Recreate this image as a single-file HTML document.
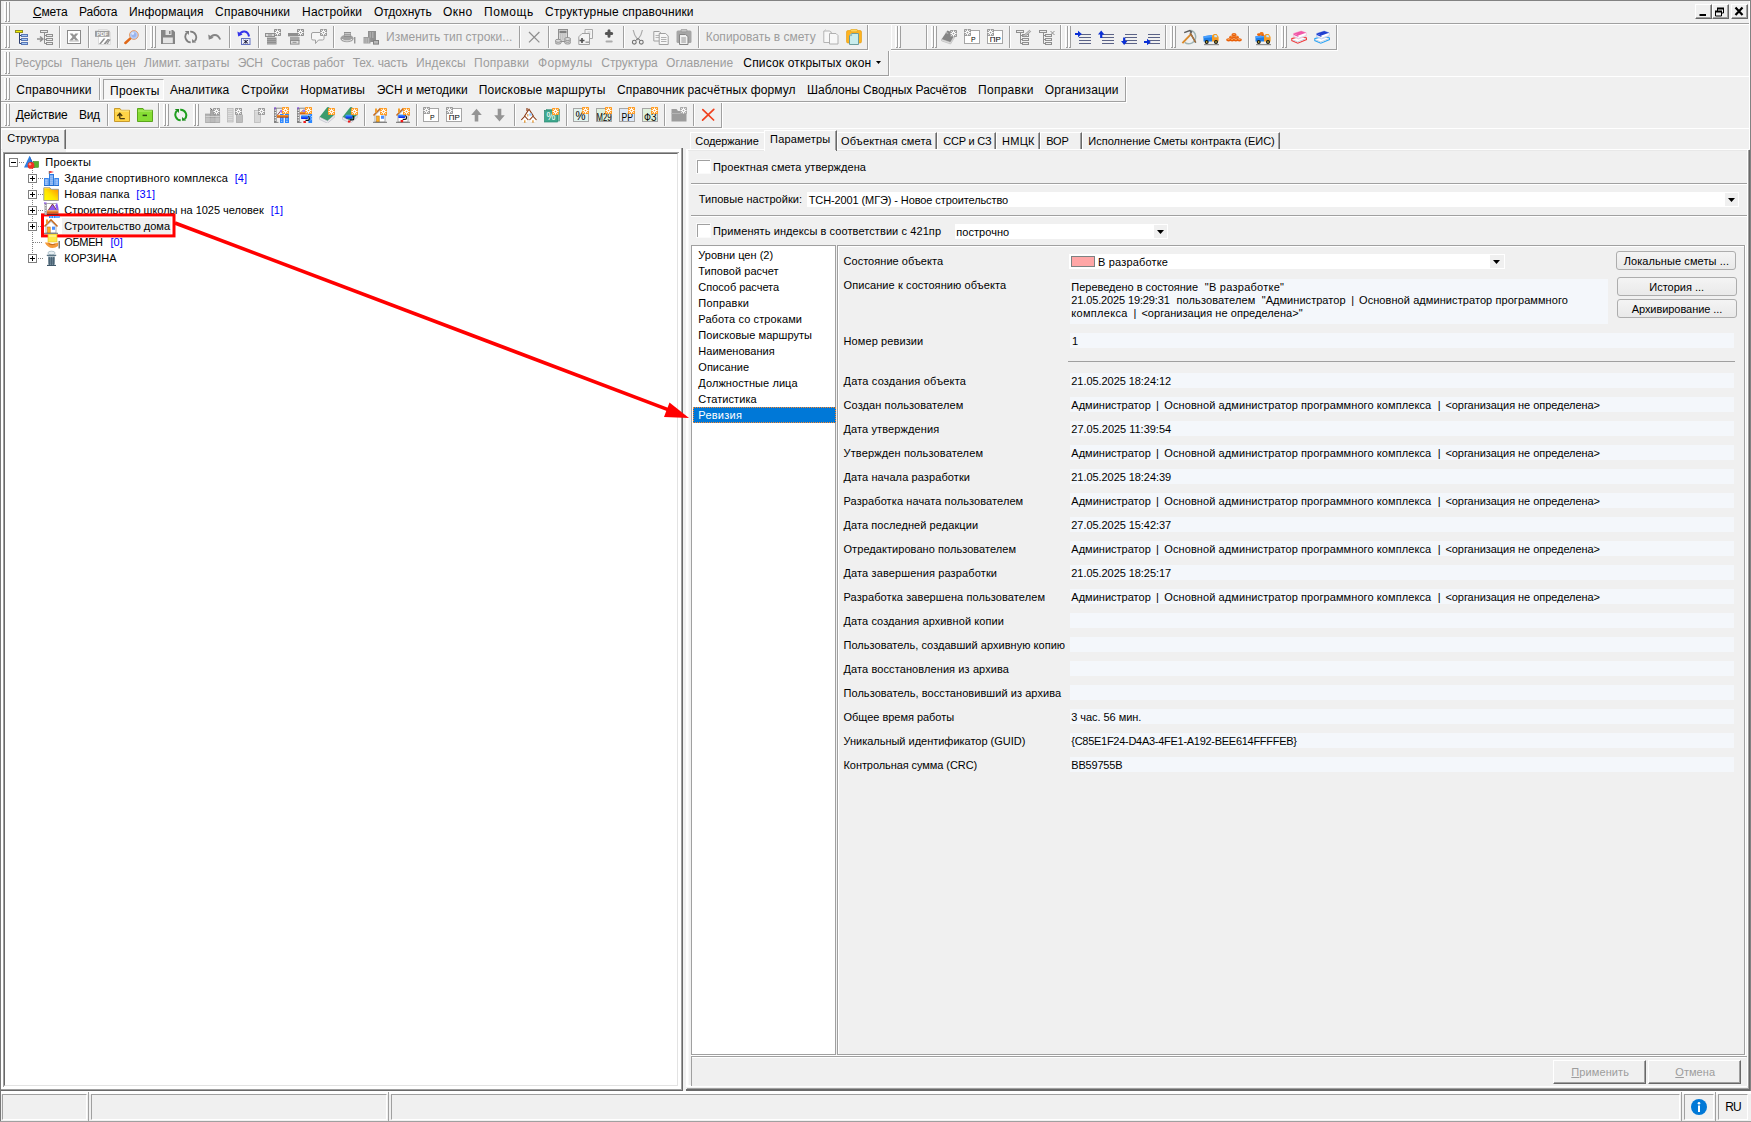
<!DOCTYPE html><html lang="ru"><head><meta charset="utf-8"><title>Смета</title><style>
html,body{margin:0;padding:0}
body{width:1751px;height:1122px;overflow:hidden;background:#f0f0f0;position:relative;font-family:"Liberation Sans",sans-serif;}
div,span,svg{position:absolute;box-sizing:border-box}
span{white-space:pre;color:#000}
.t{font-size:11px;line-height:13px;height:13px}
.m{font-size:12px;line-height:15px;height:15px}
.g{color:#9d9d9d}
.b{color:#0000ff}
.w{color:#fff}
u{text-decoration:underline;text-underline-offset:1px}
</style></head><body><div style="left:0px;top:0px;width:1751px;height:1px;background:#828282;"></div><div style="left:0px;top:0px;width:1px;height:1122px;background:#787878;"></div><div style="left:1px;top:25px;width:1px;height:103px;background:#f8f8f8;"></div><div style="left:1750px;top:0px;width:1px;height:1091px;background:#828282;"></div><div style="left:1749px;top:1px;width:1px;height:148px;background:#ffffff;"></div><div style="left:4px;top:2px;width:1px;height:20px;background:#ffffff;"></div><div style="left:5px;top:2px;width:1px;height:20px;background:#f8f8f8;"></div><div style="left:6px;top:2px;width:1px;height:20px;background:#a0a0a0;"></div><div style="left:5px;top:21px;width:2px;height:1px;background:#a0a0a0;"></div><div style="left:7px;top:2px;width:1px;height:20px;background:#ffffff;"></div><div style="left:8px;top:2px;width:1px;height:20px;background:#f8f8f8;"></div><div style="left:9px;top:2px;width:1px;height:20px;background:#a0a0a0;"></div><div style="left:8px;top:21px;width:2px;height:1px;background:#a0a0a0;"></div><div style="left:1px;top:23px;width:1748px;height:1px;background:#a0a0a0;"></div><div style="left:1px;top:24px;width:1748px;height:1px;background:#ffffff;"></div><span id="t0" class="m" style="left:32.9px;top:5px;letter-spacing:-0.127px;"><u>С</u>мета</span><span id="t1" class="m" style="left:79.1px;top:5px;letter-spacing:-0.235px;">Работа</span><span id="t2" class="m" style="left:129.1px;top:5px;letter-spacing:0.112px;">Информация</span><span id="t3" class="m" style="left:215.1px;top:5px;letter-spacing:0.227px;">Справочники</span><span id="t4" class="m" style="left:302.1px;top:5px;letter-spacing:0.128px;">Настройки</span><span id="t5" class="m" style="left:374.1px;top:5px;letter-spacing:-0.084px;">Отдохнуть</span><span id="t6" class="m" style="left:443.1px;top:5px;letter-spacing:0.427px;">Окно</span><span id="t7" class="m" style="left:484.1px;top:5px;letter-spacing:0.540px;">Помощь</span><span id="t8" class="m" style="left:545.1px;top:5px;letter-spacing:0.133px;">Структурные справочники</span><div style="left:1695px;top:4px;width:17px;height:15px;background:#f0f0f0;border-top:1px solid #ffffff;border-left:1px solid #ffffff;border-right:1px solid #696969;border-bottom:1px solid #696969;"></div><div style="left:1696px;top:5px;width:15px;height:13px;background:#f0f0f0;border-right:1px solid #a0a0a0;border-bottom:1px solid #a0a0a0;"></div><div style="left:1712px;top:4px;width:17px;height:15px;background:#f0f0f0;border-top:1px solid #ffffff;border-left:1px solid #ffffff;border-right:1px solid #696969;border-bottom:1px solid #696969;"></div><div style="left:1713px;top:5px;width:15px;height:13px;background:#f0f0f0;border-right:1px solid #a0a0a0;border-bottom:1px solid #a0a0a0;"></div><div style="left:1731px;top:4px;width:17px;height:15px;background:#f0f0f0;border-top:1px solid #ffffff;border-left:1px solid #ffffff;border-right:1px solid #696969;border-bottom:1px solid #696969;"></div><div style="left:1732px;top:5px;width:15px;height:13px;background:#f0f0f0;border-right:1px solid #a0a0a0;border-bottom:1px solid #a0a0a0;"></div><svg style="left:1695px;top:4px" width="54" height="15" viewBox="0 0 54 15"><rect x="4.5" y="10" width="6.500" height="2" fill="#000"/><path d="M22.500 4.500h6v4.500h-6z" fill="#f0f0f0" stroke="#000"/><rect x="22" y="3.500" width="7" height="2" fill="#000"/><path d="M20.500 7.500h6v4.500h-6z" fill="#f0f0f0" stroke="#000"/><rect x="20" y="6.500" width="7" height="2" fill="#000"/><path d="M40.500 3.500l7 7.500M47.500 3.500l-7 7.500" stroke="#000" stroke-width="2.200" fill="none"/></svg><div style="left:1px;top:49px;width:145px;height:1px;background:#a0a0a0;"></div><div style="left:1px;top:50px;width:145px;height:1px;background:#ffffff;"></div><div style="left:145px;top:25px;width:1px;height:25px;background:#a0a0a0;"></div><div style="left:146px;top:25px;width:1px;height:26px;background:#ffffff;"></div><div style="left:4px;top:26px;width:1px;height:22px;background:#ffffff;"></div><div style="left:5px;top:26px;width:1px;height:22px;background:#f8f8f8;"></div><div style="left:6px;top:26px;width:1px;height:22px;background:#a0a0a0;"></div><div style="left:5px;top:47px;width:2px;height:1px;background:#a0a0a0;"></div><div style="left:7px;top:26px;width:1px;height:22px;background:#ffffff;"></div><div style="left:8px;top:26px;width:1px;height:22px;background:#f8f8f8;"></div><div style="left:9px;top:26px;width:1px;height:22px;background:#a0a0a0;"></div><div style="left:8px;top:47px;width:2px;height:1px;background:#a0a0a0;"></div><div style="left:59px;top:26px;width:1px;height:22px;background:#a0a0a0;"></div><div style="left:60px;top:26px;width:1px;height:22px;background:#ffffff;"></div><div style="left:88px;top:26px;width:1px;height:22px;background:#a0a0a0;"></div><div style="left:89px;top:26px;width:1px;height:22px;background:#ffffff;"></div><div style="left:117px;top:26px;width:1px;height:22px;background:#a0a0a0;"></div><div style="left:118px;top:26px;width:1px;height:22px;background:#ffffff;"></div><div style="left:147px;top:49px;width:721px;height:1px;background:#a0a0a0;"></div><div style="left:147px;top:50px;width:721px;height:1px;background:#ffffff;"></div><div style="left:867px;top:25px;width:1px;height:25px;background:#a0a0a0;"></div><div style="left:868px;top:25px;width:1px;height:26px;background:#ffffff;"></div><div style="left:150px;top:26px;width:1px;height:22px;background:#ffffff;"></div><div style="left:151px;top:26px;width:1px;height:22px;background:#f8f8f8;"></div><div style="left:152px;top:26px;width:1px;height:22px;background:#a0a0a0;"></div><div style="left:151px;top:47px;width:2px;height:1px;background:#a0a0a0;"></div><div style="left:153px;top:26px;width:1px;height:22px;background:#ffffff;"></div><div style="left:154px;top:26px;width:1px;height:22px;background:#f8f8f8;"></div><div style="left:155px;top:26px;width:1px;height:22px;background:#a0a0a0;"></div><div style="left:154px;top:47px;width:2px;height:1px;background:#a0a0a0;"></div><div style="left:229px;top:26px;width:1px;height:22px;background:#a0a0a0;"></div><div style="left:230px;top:26px;width:1px;height:22px;background:#ffffff;"></div><div style="left:258px;top:26px;width:1px;height:22px;background:#a0a0a0;"></div><div style="left:259px;top:26px;width:1px;height:22px;background:#ffffff;"></div><div style="left:333px;top:26px;width:1px;height:22px;background:#a0a0a0;"></div><div style="left:334px;top:26px;width:1px;height:22px;background:#ffffff;"></div><div style="left:519px;top:26px;width:1px;height:22px;background:#a0a0a0;"></div><div style="left:520px;top:26px;width:1px;height:22px;background:#ffffff;"></div><div style="left:548px;top:26px;width:1px;height:22px;background:#a0a0a0;"></div><div style="left:549px;top:26px;width:1px;height:22px;background:#ffffff;"></div><div style="left:623px;top:26px;width:1px;height:22px;background:#a0a0a0;"></div><div style="left:624px;top:26px;width:1px;height:22px;background:#ffffff;"></div><div style="left:698px;top:26px;width:1px;height:22px;background:#a0a0a0;"></div><div style="left:699px;top:26px;width:1px;height:22px;background:#ffffff;"></div><span id="t9" class="m g" style="left:386.1px;top:30px;letter-spacing:-0.004px;">Изменить тип строки...</span><span id="t10" class="m g" style="left:705.7px;top:30px;letter-spacing:0.010px;">Копировать в смету</span><div style="left:891px;top:49px;width:36px;height:1px;background:#a0a0a0;"></div><div style="left:891px;top:50px;width:36px;height:1px;background:#ffffff;"></div><div style="left:926px;top:25px;width:1px;height:25px;background:#a0a0a0;"></div><div style="left:927px;top:25px;width:1px;height:26px;background:#ffffff;"></div><div style="left:895px;top:26px;width:1px;height:22px;background:#ffffff;"></div><div style="left:896px;top:26px;width:1px;height:22px;background:#f8f8f8;"></div><div style="left:897px;top:26px;width:1px;height:22px;background:#a0a0a0;"></div><div style="left:896px;top:47px;width:2px;height:1px;background:#a0a0a0;"></div><div style="left:898px;top:26px;width:1px;height:22px;background:#ffffff;"></div><div style="left:899px;top:26px;width:1px;height:22px;background:#f8f8f8;"></div><div style="left:900px;top:26px;width:1px;height:22px;background:#a0a0a0;"></div><div style="left:899px;top:47px;width:2px;height:1px;background:#a0a0a0;"></div><div style="left:891px;top:25px;width:1px;height:24px;background:#ffffff;"></div><div style="left:927px;top:49px;width:134px;height:1px;background:#a0a0a0;"></div><div style="left:927px;top:50px;width:134px;height:1px;background:#ffffff;"></div><div style="left:1060px;top:25px;width:1px;height:25px;background:#a0a0a0;"></div><div style="left:1061px;top:25px;width:1px;height:26px;background:#ffffff;"></div><div style="left:931px;top:26px;width:1px;height:22px;background:#ffffff;"></div><div style="left:932px;top:26px;width:1px;height:22px;background:#f8f8f8;"></div><div style="left:933px;top:26px;width:1px;height:22px;background:#a0a0a0;"></div><div style="left:932px;top:47px;width:2px;height:1px;background:#a0a0a0;"></div><div style="left:934px;top:26px;width:1px;height:22px;background:#ffffff;"></div><div style="left:935px;top:26px;width:1px;height:22px;background:#f8f8f8;"></div><div style="left:936px;top:26px;width:1px;height:22px;background:#a0a0a0;"></div><div style="left:935px;top:47px;width:2px;height:1px;background:#a0a0a0;"></div><div style="left:1009px;top:26px;width:1px;height:22px;background:#a0a0a0;"></div><div style="left:1010px;top:26px;width:1px;height:22px;background:#ffffff;"></div><div style="left:1061px;top:49px;width:105px;height:1px;background:#a0a0a0;"></div><div style="left:1061px;top:50px;width:105px;height:1px;background:#ffffff;"></div><div style="left:1165px;top:25px;width:1px;height:25px;background:#a0a0a0;"></div><div style="left:1166px;top:25px;width:1px;height:26px;background:#ffffff;"></div><div style="left:1065px;top:26px;width:1px;height:22px;background:#ffffff;"></div><div style="left:1066px;top:26px;width:1px;height:22px;background:#f8f8f8;"></div><div style="left:1067px;top:26px;width:1px;height:22px;background:#a0a0a0;"></div><div style="left:1066px;top:47px;width:2px;height:1px;background:#a0a0a0;"></div><div style="left:1068px;top:26px;width:1px;height:22px;background:#ffffff;"></div><div style="left:1069px;top:26px;width:1px;height:22px;background:#f8f8f8;"></div><div style="left:1070px;top:26px;width:1px;height:22px;background:#a0a0a0;"></div><div style="left:1069px;top:47px;width:2px;height:1px;background:#a0a0a0;"></div><div style="left:1166px;top:49px;width:111px;height:1px;background:#a0a0a0;"></div><div style="left:1166px;top:50px;width:111px;height:1px;background:#ffffff;"></div><div style="left:1276px;top:25px;width:1px;height:25px;background:#a0a0a0;"></div><div style="left:1277px;top:25px;width:1px;height:26px;background:#ffffff;"></div><div style="left:1170px;top:26px;width:1px;height:22px;background:#ffffff;"></div><div style="left:1171px;top:26px;width:1px;height:22px;background:#f8f8f8;"></div><div style="left:1172px;top:26px;width:1px;height:22px;background:#a0a0a0;"></div><div style="left:1171px;top:47px;width:2px;height:1px;background:#a0a0a0;"></div><div style="left:1173px;top:26px;width:1px;height:22px;background:#ffffff;"></div><div style="left:1174px;top:26px;width:1px;height:22px;background:#f8f8f8;"></div><div style="left:1175px;top:26px;width:1px;height:22px;background:#a0a0a0;"></div><div style="left:1174px;top:47px;width:2px;height:1px;background:#a0a0a0;"></div><div style="left:1248px;top:26px;width:1px;height:22px;background:#a0a0a0;"></div><div style="left:1249px;top:26px;width:1px;height:22px;background:#ffffff;"></div><div style="left:1277px;top:49px;width:60px;height:1px;background:#a0a0a0;"></div><div style="left:1277px;top:50px;width:60px;height:1px;background:#ffffff;"></div><div style="left:1336px;top:25px;width:1px;height:25px;background:#a0a0a0;"></div><div style="left:1337px;top:25px;width:1px;height:26px;background:#ffffff;"></div><div style="left:1281px;top:26px;width:1px;height:22px;background:#ffffff;"></div><div style="left:1282px;top:26px;width:1px;height:22px;background:#f8f8f8;"></div><div style="left:1283px;top:26px;width:1px;height:22px;background:#a0a0a0;"></div><div style="left:1282px;top:47px;width:2px;height:1px;background:#a0a0a0;"></div><div style="left:1284px;top:26px;width:1px;height:22px;background:#ffffff;"></div><div style="left:1285px;top:26px;width:1px;height:22px;background:#f8f8f8;"></div><div style="left:1286px;top:26px;width:1px;height:22px;background:#a0a0a0;"></div><div style="left:1285px;top:47px;width:2px;height:1px;background:#a0a0a0;"></div><div style="left:1px;top:75px;width:888px;height:1px;background:#a0a0a0;"></div><div style="left:1px;top:76px;width:888px;height:1px;background:#ffffff;"></div><div style="left:888px;top:51px;width:1px;height:25px;background:#a0a0a0;"></div><div style="left:889px;top:51px;width:1px;height:26px;background:#ffffff;"></div><div style="left:4px;top:52px;width:1px;height:22px;background:#ffffff;"></div><div style="left:5px;top:52px;width:1px;height:22px;background:#f8f8f8;"></div><div style="left:6px;top:52px;width:1px;height:22px;background:#a0a0a0;"></div><div style="left:5px;top:73px;width:2px;height:1px;background:#a0a0a0;"></div><div style="left:7px;top:52px;width:1px;height:22px;background:#ffffff;"></div><div style="left:8px;top:52px;width:1px;height:22px;background:#f8f8f8;"></div><div style="left:9px;top:52px;width:1px;height:22px;background:#a0a0a0;"></div><div style="left:8px;top:73px;width:2px;height:1px;background:#a0a0a0;"></div><span id="t11" class="m g" style="left:15.1px;top:56px;letter-spacing:-0.047px;">Ресурсы</span><span id="t12" class="m g" style="left:71.1px;top:56px;letter-spacing:-0.023px;">Панель цен</span><span id="t13" class="m g" style="left:144.1px;top:56px;letter-spacing:0.015px;">Лимит. затраты</span><span id="t14" class="m g" style="left:237.7px;top:56px;letter-spacing:-0.323px;">ЭСН</span><span id="t15" class="m g" style="left:271.1px;top:56px;letter-spacing:-0.135px;">Состав работ</span><span id="t16" class="m g" style="left:352.7px;top:56px;letter-spacing:-0.142px;">Тех. часть</span><span id="t17" class="m g" style="left:416.1px;top:56px;letter-spacing:0.095px;">Индексы</span><span id="t18" class="m g" style="left:474.1px;top:56px;letter-spacing:0.214px;">Поправки</span><span id="t19" class="m g" style="left:538.1px;top:56px;letter-spacing:0.283px;">Формулы</span><span id="t20" class="m g" style="left:601.3px;top:56px;letter-spacing:-0.060px;">Структура</span><span id="t21" class="m g" style="left:666.1px;top:56px;letter-spacing:0.009px;">Оглавление</span><span id="t22" class="m" style="left:743.3px;top:56px;letter-spacing:0.173px;">Список открытых окон</span><svg style="left:876px;top:61px" width="5" height="3"><path d="M0 0h5l-2.5 3z" fill="#000"/></svg><div style="left:1px;top:76px;width:1748px;height:1px;background:#ffffff;"></div><div style="left:1px;top:101px;width:1125px;height:1px;background:#a0a0a0;"></div><div style="left:1px;top:102px;width:1125px;height:1px;background:#ffffff;"></div><div style="left:1125px;top:77px;width:1px;height:25px;background:#a0a0a0;"></div><div style="left:1126px;top:77px;width:1px;height:26px;background:#ffffff;"></div><div style="left:4px;top:78px;width:1px;height:22px;background:#ffffff;"></div><div style="left:5px;top:78px;width:1px;height:22px;background:#f8f8f8;"></div><div style="left:6px;top:78px;width:1px;height:22px;background:#a0a0a0;"></div><div style="left:5px;top:99px;width:2px;height:1px;background:#a0a0a0;"></div><div style="left:7px;top:78px;width:1px;height:22px;background:#ffffff;"></div><div style="left:8px;top:78px;width:1px;height:22px;background:#f8f8f8;"></div><div style="left:9px;top:78px;width:1px;height:22px;background:#a0a0a0;"></div><div style="left:8px;top:99px;width:2px;height:1px;background:#a0a0a0;"></div><div style="left:99px;top:78px;width:1px;height:22px;background:#a0a0a0;"></div><div style="left:100px;top:78px;width:1px;height:22px;background:#ffffff;"></div><div style="left:103px;top:79px;width:61px;height:21px;background:#f6f6f6;border-top:1px solid #a0a0a0;border-left:1px solid #a0a0a0;border-right:1px solid #ffffff;border-bottom:1px solid #ffffff;"></div><span id="t23" class="m" style="left:16.3px;top:83px;letter-spacing:0.245px;">Справочники</span><span id="t24" class="m" style="left:110.1px;top:84px;letter-spacing:0.206px;">Проекты</span><span id="t25" class="m" style="left:169.9px;top:83px;">Аналитика</span><span id="t26" class="m" style="left:241.3px;top:83px;letter-spacing:0.175px;">Стройки</span><span id="t27" class="m" style="left:300.3px;top:83px;letter-spacing:0.103px;">Нормативы</span><span id="t28" class="m" style="left:376.7px;top:83px;letter-spacing:-0.021px;">ЭСН и методики</span><span id="t29" class="m" style="left:478.7px;top:83px;letter-spacing:0.225px;">Поисковые маршруты</span><span id="t30" class="m" style="left:617.1px;top:83px;letter-spacing:0.100px;">Справочник расчётных формул</span><span id="t31" class="m" style="left:807.1px;top:83px;letter-spacing:-0.050px;">Шаблоны Сводных Расчётов</span><span id="t32" class="m" style="left:978.1px;top:83px;letter-spacing:0.264px;">Поправки</span><span id="t33" class="m" style="left:1044.7px;top:83px;letter-spacing:0.128px;">Организации</span><div style="left:1px;top:127px;width:158px;height:1px;background:#a0a0a0;"></div><div style="left:1px;top:128px;width:158px;height:1px;background:#ffffff;"></div><div style="left:158px;top:103px;width:1px;height:25px;background:#a0a0a0;"></div><div style="left:159px;top:103px;width:1px;height:26px;background:#ffffff;"></div><div style="left:4px;top:104px;width:1px;height:22px;background:#ffffff;"></div><div style="left:5px;top:104px;width:1px;height:22px;background:#f8f8f8;"></div><div style="left:6px;top:104px;width:1px;height:22px;background:#a0a0a0;"></div><div style="left:5px;top:125px;width:2px;height:1px;background:#a0a0a0;"></div><div style="left:7px;top:104px;width:1px;height:22px;background:#ffffff;"></div><div style="left:8px;top:104px;width:1px;height:22px;background:#f8f8f8;"></div><div style="left:9px;top:104px;width:1px;height:22px;background:#a0a0a0;"></div><div style="left:8px;top:125px;width:2px;height:1px;background:#a0a0a0;"></div><span id="t34" class="m" style="left:15.7px;top:108px;letter-spacing:-0.096px;">Действие</span><span id="t35" class="m" style="left:79.1px;top:108px;letter-spacing:-0.373px;">Вид</span><div style="left:107px;top:104px;width:1px;height:22px;background:#a0a0a0;"></div><div style="left:108px;top:104px;width:1px;height:22px;background:#ffffff;"></div><div style="left:160px;top:127px;width:562px;height:1px;background:#a0a0a0;"></div><div style="left:160px;top:128px;width:562px;height:1px;background:#ffffff;"></div><div style="left:721px;top:103px;width:1px;height:25px;background:#a0a0a0;"></div><div style="left:722px;top:103px;width:1px;height:26px;background:#ffffff;"></div><div style="left:163px;top:104px;width:1px;height:22px;background:#ffffff;"></div><div style="left:164px;top:104px;width:1px;height:22px;background:#f8f8f8;"></div><div style="left:165px;top:104px;width:1px;height:22px;background:#a0a0a0;"></div><div style="left:164px;top:125px;width:2px;height:1px;background:#a0a0a0;"></div><div style="left:166px;top:104px;width:1px;height:22px;background:#ffffff;"></div><div style="left:167px;top:104px;width:1px;height:22px;background:#f8f8f8;"></div><div style="left:168px;top:104px;width:1px;height:22px;background:#a0a0a0;"></div><div style="left:167px;top:125px;width:2px;height:1px;background:#a0a0a0;"></div><div style="left:193px;top:104px;width:1px;height:22px;background:#ffffff;"></div><div style="left:194px;top:104px;width:1px;height:22px;background:#f8f8f8;"></div><div style="left:195px;top:104px;width:1px;height:22px;background:#a0a0a0;"></div><div style="left:194px;top:125px;width:2px;height:1px;background:#a0a0a0;"></div><div style="left:196px;top:104px;width:1px;height:22px;background:#ffffff;"></div><div style="left:197px;top:104px;width:1px;height:22px;background:#f8f8f8;"></div><div style="left:198px;top:104px;width:1px;height:22px;background:#a0a0a0;"></div><div style="left:197px;top:125px;width:2px;height:1px;background:#a0a0a0;"></div><div style="left:364px;top:104px;width:1px;height:22px;background:#a0a0a0;"></div><div style="left:365px;top:104px;width:1px;height:22px;background:#ffffff;"></div><div style="left:416px;top:104px;width:1px;height:22px;background:#a0a0a0;"></div><div style="left:417px;top:104px;width:1px;height:22px;background:#ffffff;"></div><div style="left:514px;top:104px;width:1px;height:22px;background:#a0a0a0;"></div><div style="left:515px;top:104px;width:1px;height:22px;background:#ffffff;"></div><div style="left:566px;top:104px;width:1px;height:22px;background:#a0a0a0;"></div><div style="left:567px;top:104px;width:1px;height:22px;background:#ffffff;"></div><div style="left:664px;top:104px;width:1px;height:22px;background:#a0a0a0;"></div><div style="left:665px;top:104px;width:1px;height:22px;background:#ffffff;"></div><div style="left:693px;top:104px;width:1px;height:22px;background:#a0a0a0;"></div><div style="left:694px;top:104px;width:1px;height:22px;background:#ffffff;"></div><div style="left:462px;top:129px;width:78px;height:1px;background:#ffffff;"></div><div style="left:1px;top:129px;width:65px;height:20px;background:#f0f0f0;border-top:1px solid #ffffff;border-left:1px solid #ffffff;border-right:1px solid #696969;"></div><div style="left:64px;top:130px;width:1px;height:19px;background:#a0a0a0;"></div><span id="t36" class="t" style="left:7.3px;top:132px;letter-spacing:-0.043px;">Структура</span><div style="left:66px;top:149px;width:615px;height:1px;background:#ffffff;"></div><div style="left:1px;top:150px;width:680px;height:939px;background:#ffffff;"></div><div style="left:2px;top:149px;width:64px;height:3px;background:#f0f0f0;"></div><div style="left:3px;top:152px;width:676px;height:935px;background:#ffffff;border-top:1px solid #a0a0a0;border-left:1px solid #a0a0a0;"></div><div style="left:4px;top:153px;width:674px;height:933px;background:#ffffff;border-top:1px solid #696969;border-left:1px solid #696969;border-right:1px solid #e3e3e3;border-bottom:1px solid #e3e3e3;"></div><div style="left:681px;top:148px;width:1px;height:942px;background:#a0a0a0;"></div><div style="left:682px;top:148px;width:1px;height:943px;background:#696969;"></div><div style="left:1px;top:1089px;width:681px;height:1px;background:#a0a0a0;"></div><div style="left:1px;top:1090px;width:682px;height:1px;background:#696969;"></div><div style="left:9px;top:158px;width:9px;height:9px;background:#ffffff;border:1px solid #808080;"></div><div style="left:11px;top:162px;width:5px;height:1px;background:#000;"></div><div style="left:19px;top:162px;width:5px;height:1px;background-image:repeating-linear-gradient(90deg,#808080 0 1px,transparent 1px 2px);background-color:transparent;"></div><div style="left:32px;top:168px;width:1px;height:86px;background-image:repeating-linear-gradient(180deg,#808080 0 1px,transparent 1px 2px);background-color:transparent;"></div><span id="t37" class="t" style="left:45.3px;top:156px;letter-spacing:0.237px;">Проекты</span><div style="left:62px;top:218px;width:109px;height:16px;background:#f0f0f0;"></div><div style="left:28px;top:174px;width:9px;height:9px;background:#ffffff;border:1px solid #808080;"></div><div style="left:30px;top:178px;width:5px;height:1px;background:#000;"></div><div style="left:32px;top:176px;width:1px;height:5px;background:#000;"></div><div style="left:38px;top:178px;width:5px;height:1px;background-image:repeating-linear-gradient(90deg,#808080 0 1px,transparent 1px 2px);background-color:transparent;"></div><span id="t38" class="t" style="left:64.3px;top:172px;letter-spacing:0.141px;">Здание спортивного комплекса</span><span id="t39" class="t b" style="left:234.7px;top:172px;letter-spacing:0.055px;">[4]</span><div style="left:28px;top:190px;width:9px;height:9px;background:#ffffff;border:1px solid #808080;"></div><div style="left:30px;top:194px;width:5px;height:1px;background:#000;"></div><div style="left:32px;top:192px;width:1px;height:5px;background:#000;"></div><div style="left:38px;top:194px;width:5px;height:1px;background-image:repeating-linear-gradient(90deg,#808080 0 1px,transparent 1px 2px);background-color:transparent;"></div><span id="t40" class="t" style="left:64.3px;top:188px;letter-spacing:0.116px;">Новая папка</span><span id="t41" class="t b" style="left:136.3px;top:188px;letter-spacing:0.160px;">[31]</span><div style="left:28px;top:206px;width:9px;height:9px;background:#ffffff;border:1px solid #808080;"></div><div style="left:30px;top:210px;width:5px;height:1px;background:#000;"></div><div style="left:32px;top:208px;width:1px;height:5px;background:#000;"></div><div style="left:38px;top:210px;width:5px;height:1px;background-image:repeating-linear-gradient(90deg,#808080 0 1px,transparent 1px 2px);background-color:transparent;"></div><span id="t42" class="t" style="left:64.3px;top:204px;letter-spacing:-0.023px;">Строительство школы на 1025 человек</span><span id="t43" class="t b" style="left:270.7px;top:204px;letter-spacing:0.055px;">[1]</span><div style="left:28px;top:222px;width:9px;height:9px;background:#ffffff;border:1px solid #808080;"></div><div style="left:30px;top:226px;width:5px;height:1px;background:#000;"></div><div style="left:32px;top:224px;width:1px;height:5px;background:#000;"></div><div style="left:38px;top:226px;width:5px;height:1px;background-image:repeating-linear-gradient(90deg,#808080 0 1px,transparent 1px 2px);background-color:transparent;"></div><span id="t44" class="t" style="left:64.3px;top:220px;letter-spacing:-0.007px;">Строительство дома</span><div style="left:33px;top:242px;width:10px;height:1px;background-image:repeating-linear-gradient(90deg,#808080 0 1px,transparent 1px 2px);background-color:transparent;"></div><span id="t45" class="t" style="left:64.3px;top:236px;letter-spacing:-0.364px;">ОБМЕН</span><span id="t46" class="t b" style="left:110.5px;top:236px;letter-spacing:0.055px;">[0]</span><div style="left:28px;top:254px;width:9px;height:9px;background:#ffffff;border:1px solid #808080;"></div><div style="left:30px;top:258px;width:5px;height:1px;background:#000;"></div><div style="left:32px;top:256px;width:1px;height:5px;background:#000;"></div><div style="left:38px;top:258px;width:5px;height:1px;background-image:repeating-linear-gradient(90deg,#808080 0 1px,transparent 1px 2px);background-color:transparent;"></div><span id="t47" class="t" style="left:64.3px;top:252px;letter-spacing:0.088px;">КОРЗИНА</span><div style="left:686px;top:149px;width:2px;height:938px;background:#ffffff;"></div><div style="left:688px;top:150px;width:1px;height:936px;background:#f8f8f8;"></div><div style="left:686px;top:149px;width:1063px;height:1px;background:#ffffff;"></div><div style="left:688px;top:150px;width:1059px;height:1px;background:#e8e8e8;"></div><div style="left:686px;top:1085px;width:1061px;height:1px;background:#ffffff;"></div><div style="left:686px;top:1086px;width:1061px;height:1px;background:#ffffff;"></div><div style="left:687px;top:1088px;width:1061px;height:1px;background:#a0a0a0;"></div><div style="left:686px;top:1089px;width:1064px;height:2px;background:#696969;"></div><div style="left:1747px;top:150px;width:1px;height:936px;background:#ffffff;"></div><div style="left:1748px;top:150px;width:1px;height:939px;background:#a0a0a0;"></div><div style="left:1749px;top:150px;width:1px;height:941px;background:#696969;"></div><div style="left:1px;top:128px;width:1749px;height:1px;background:#ffffff;"></div><div style="left:1px;top:1091px;width:1750px;height:3px;background:#ffffff;"></div><div style="left:690px;top:132px;width:74px;height:17px;background:#f0f0f0;border-top:1px solid #ffffff;border-left:1px solid #ffffff;"></div><span id="t48" class="t" style="left:695.3px;top:135px;letter-spacing:-0.090px;">Содержание</span><div style="left:837px;top:132px;width:100px;height:17px;background:#f0f0f0;border-top:1px solid #ffffff;border-left:1px solid #ffffff;border-right:1px solid #696969;"></div><div style="left:935px;top:133px;width:1px;height:16px;background:#a0a0a0;"></div><span id="t49" class="t" style="left:841.1px;top:135px;letter-spacing:0.139px;">Объектная смета</span><div style="left:937px;top:132px;width:59px;height:17px;background:#f0f0f0;border-top:1px solid #ffffff;border-left:1px solid #ffffff;border-right:1px solid #696969;"></div><div style="left:994px;top:133px;width:1px;height:16px;background:#a0a0a0;"></div><span id="t50" class="t" style="left:943.3px;top:135px;letter-spacing:-0.244px;">ССР и СЗ</span><div style="left:996px;top:132px;width:44px;height:17px;background:#f0f0f0;border-top:1px solid #ffffff;border-left:1px solid #ffffff;border-right:1px solid #696969;"></div><div style="left:1038px;top:133px;width:1px;height:16px;background:#a0a0a0;"></div><span id="t51" class="t" style="left:1002.1px;top:135px;letter-spacing:0.236px;">НМЦК</span><div style="left:1040px;top:132px;width:42px;height:17px;background:#f0f0f0;border-top:1px solid #ffffff;border-left:1px solid #ffffff;border-right:1px solid #696969;"></div><div style="left:1080px;top:133px;width:1px;height:16px;background:#a0a0a0;"></div><span id="t52" class="t" style="left:1046.3px;top:135px;letter-spacing:-0.158px;">ВОР</span><div style="left:1082px;top:132px;width:198px;height:17px;background:#f0f0f0;border-top:1px solid #ffffff;border-left:1px solid #ffffff;border-right:1px solid #696969;"></div><div style="left:1278px;top:133px;width:1px;height:16px;background:#a0a0a0;"></div><span id="t53" class="t" style="left:1088.3px;top:135px;">Исполнение Сметы контракта (ЕИС)</span><div style="left:764px;top:130px;width:73px;height:21px;background:#f0f0f0;border-top:1px solid #ffffff;border-left:1px solid #ffffff;border-right:1px solid #696969;"></div><div style="left:835px;top:131px;width:1px;height:19px;background:#a0a0a0;"></div><span id="t54" class="t" style="left:770.1px;top:133px;letter-spacing:0.173px;">Параметры</span><div style="left:696px;top:159px;width:15px;height:15px;background:#fafafa;"></div><div style="left:697px;top:160px;width:13px;height:13px;background:#ffffff;border-top:1px solid #a0a0a0;border-left:1px solid #a0a0a0;"></div><span id="t55" class="t" style="left:713.1px;top:161px;letter-spacing:0.079px;">Проектная смета утверждена</span><div style="left:691px;top:183px;width:1056px;height:1px;background:#a0a0a0;"></div><div style="left:691px;top:184px;width:1056px;height:1px;background:#ffffff;"></div><span id="t56" class="t" style="left:698.7px;top:193px;letter-spacing:0.049px;">Типовые настройки:</span><div style="left:807px;top:192px;width:932px;height:15px;background:#ffffff;"></div><span id="t57" class="t" style="left:808.7px;top:194px;letter-spacing:-0.103px;">ТСН-2001 (МГЭ) - Новое строительство</span><div style="left:1725px;top:193px;width:13px;height:13px;background:#f0f0f0;"></div><svg style="left:1728px;top:198px" width="7" height="4"><path d="M0 0h7l-3.5 4z" fill="#000"/></svg><div style="left:691px;top:215px;width:1056px;height:1px;background:#a0a0a0;"></div><div style="left:691px;top:216px;width:1056px;height:1px;background:#ffffff;"></div><div style="left:696px;top:223px;width:15px;height:15px;background:#fafafa;"></div><div style="left:697px;top:224px;width:13px;height:13px;background:#ffffff;border-top:1px solid #a0a0a0;border-left:1px solid #a0a0a0;"></div><span id="t58" class="t" style="left:713.1px;top:225px;letter-spacing:0.087px;">Применять индексы в соответствии с 421пр</span><div style="left:955px;top:224px;width:213px;height:15px;background:#ffffff;"></div><span id="t59" class="t" style="left:956.3px;top:226px;letter-spacing:0.052px;">построчно</span><div style="left:1154px;top:225px;width:13px;height:13px;background:#f0f0f0;"></div><svg style="left:1157px;top:230px" width="7" height="4"><path d="M0 0h7l-3.5 4z" fill="#000"/></svg><div style="left:691px;top:245px;width:145px;height:810px;background:#ffffff;border-top:1px solid #a0a0a0;border-left:1px solid #a0a0a0;border-right:1px solid #a0a0a0;border-bottom:1px solid #a0a0a0;"></div><div style="left:693px;top:407px;width:143px;height:16px;background:#0078d7;border:1px dotted #ff8728;"></div><span id="t60" class="t" style="left:698.3px;top:249px;letter-spacing:0.006px;">Уровни цен (2)</span><span id="t61" class="t" style="left:698.3px;top:265px;letter-spacing:0.054px;">Типовой расчет</span><span id="t62" class="t" style="left:698.3px;top:281px;letter-spacing:-0.032px;">Способ расчета</span><span id="t63" class="t" style="left:698.3px;top:297px;letter-spacing:0.221px;">Поправки</span><span id="t64" class="t" style="left:698.3px;top:313px;letter-spacing:0.110px;">Работа со строками</span><span id="t65" class="t" style="left:698.3px;top:329px;letter-spacing:0.060px;">Поисковые маршруты</span><span id="t66" class="t" style="left:698.3px;top:345px;letter-spacing:0.026px;">Наименования</span><span id="t67" class="t" style="left:698.3px;top:361px;letter-spacing:0.022px;">Описание</span><span id="t68" class="t" style="left:698.3px;top:377px;letter-spacing:0.082px;">Должностные лица</span><span id="t69" class="t" style="left:698.3px;top:393px;letter-spacing:0.062px;">Статистика</span><span id="t70" class="t w" style="left:698.3px;top:409px;letter-spacing:0.242px;">Ревизия</span><div style="left:837px;top:245px;width:908px;height:810px;background:#f0f0f0;border-top:1px solid #a0a0a0;border-left:1px solid #a0a0a0;border-right:1px solid #a0a0a0;border-bottom:1px solid #a0a0a0;"></div><div style="left:838px;top:246px;width:1px;height:808px;background:#ffffff;"></div><div style="left:838px;top:246px;width:906px;height:1px;background:#ffffff;"></div><div style="left:1745px;top:245px;width:1px;height:811px;background:#ffffff;"></div><div style="left:691px;top:1055px;width:1055px;height:1px;background:#ffffff;"></div><div style="left:691px;top:1056px;width:1056px;height:30px;background:#f0f0f0;border-top:1px solid #a0a0a0;border-left:1px solid #a0a0a0;"></div><div style="left:692px;top:1057px;width:1054px;height:1px;background:#ffffff;"></div><span id="t71" class="t" style="left:843.5px;top:255px;letter-spacing:0.037px;">Состояние объекта</span><span id="t72" class="t" style="left:843.5px;top:279px;letter-spacing:0.082px;">Описание к состоянию объекта</span><span id="t73" class="t" style="left:843.5px;top:335px;letter-spacing:0.101px;">Номер ревизии</span><span id="t74" class="t" style="left:843.5px;top:375px;letter-spacing:0.189px;">Дата создания объекта</span><span id="t75" class="t" style="left:843.5px;top:399px;letter-spacing:0.100px;">Создан пользователем</span><span id="t76" class="t" style="left:843.5px;top:423px;letter-spacing:0.113px;">Дата утверждения</span><span id="t77" class="t" style="left:843.5px;top:447px;letter-spacing:0.140px;">Утвержден пользователем</span><span id="t78" class="t" style="left:843.5px;top:471px;letter-spacing:0.101px;">Дата начала разработки</span><span id="t79" class="t" style="left:843.5px;top:495px;letter-spacing:0.099px;">Разработка начата пользователем</span><span id="t80" class="t" style="left:843.5px;top:519px;letter-spacing:0.068px;">Дата последней редакции</span><span id="t81" class="t" style="left:843.5px;top:543px;letter-spacing:0.057px;">Отредактировано пользователем</span><span id="t82" class="t" style="left:843.5px;top:567px;letter-spacing:0.128px;">Дата завершения разработки</span><span id="t83" class="t" style="left:843.5px;top:591px;letter-spacing:0.094px;">Разработка завершена пользователем</span><span id="t84" class="t" style="left:843.5px;top:615px;letter-spacing:0.096px;">Дата создания архивной копии</span><span id="t85" class="t" style="left:843.5px;top:639px;letter-spacing:0.033px;">Пользователь, создавший архивную копию</span><span id="t86" class="t" style="left:843.5px;top:663px;letter-spacing:0.100px;">Дата восстановления из архива</span><span id="t87" class="t" style="left:843.5px;top:687px;letter-spacing:0.058px;">Пользователь, восстановивший из архива</span><span id="t88" class="t" style="left:843.5px;top:711px;letter-spacing:-0.027px;">Общее время работы</span><span id="t89" class="t" style="left:843.5px;top:735px;letter-spacing:-0.017px;">Уникальный идентификатор (GUID)</span><span id="t90" class="t" style="left:843.5px;top:759px;letter-spacing:-0.075px;">Контрольная сумма (CRC)</span><div style="left:1069px;top:254px;width:436px;height:15px;background:#ffffff;"></div><div style="left:1071px;top:256px;width:24px;height:11px;background:#ffa6a6;border:1px solid #7c8282;"></div><span id="t91" class="t" style="left:1098.1px;top:256px;letter-spacing:0.161px;">В разработке</span><div style="left:1490px;top:255px;width:14px;height:13px;background:#f0f0f0;"></div><svg style="left:1493px;top:260px" width="7" height="4"><path d="M0 0h7l-3.5 4z" fill="#000"/></svg><div style="left:1070px;top:279px;width:538px;height:45px;background:#f4f7fb;"></div><span id="t92" class="t" style="left:1071.3px;top:281px;letter-spacing:-0.019px;">Переведено в состояние</span><span id="t93" class="t" style="left:1204.8px;top:281px;letter-spacing:0.259px;">"В разработке"</span><span id="t94" class="t" style="left:1071.3px;top:294px;letter-spacing:-0.134px;">21.05.2025 19:29:31</span><span id="t95" class="t" style="left:1176.5px;top:294px;letter-spacing:0.116px;">пользователем</span><span id="t96" class="t" style="left:1261.7px;top:294px;letter-spacing:0.044px;">"Администратор</span><span id="t97" class="t" style="left:1351.3px;top:294px;letter-spacing:-0.859px;">|</span><span id="t98" class="t" style="left:1359.0px;top:294px;letter-spacing:0.076px;">Основной администратор программного</span><span id="t99" class="t" style="left:1071.3px;top:307px;letter-spacing:0.292px;">комплекса</span><span id="t100" class="t" style="left:1133.6px;top:307px;letter-spacing:-0.859px;">|</span><span id="t101" class="t" style="left:1141.4px;top:307px;letter-spacing:0.045px;">&lt;организация не определена&gt;"</span><div style="left:1070px;top:333px;width:664px;height:15px;background:#f4f7fb;"></div><span id="t102" class="t" style="left:1072.1px;top:335px;">1</span><div style="left:1068px;top:361px;width:667px;height:1px;background:#a0a0a0;"></div><div style="left:1070px;top:373px;width:664px;height:15px;background:#f4f7fb;"></div><span id="t103" class="t" style="left:1071.3px;top:375px;letter-spacing:-0.060px;">21.05.2025 18:24:12</span><div style="left:1070px;top:397px;width:664px;height:15px;background:#f4f7fb;"></div><span id="t104" class="t" style="left:1071.3px;top:399px;letter-spacing:0.010px;">Администратор</span><span id="t105" class="t" style="left:1155.9px;top:399px;letter-spacing:-0.859px;">|</span><span id="t106" class="t" style="left:1164.3px;top:399px;letter-spacing:0.087px;">Основной администратор программного комплекса</span><span id="t107" class="t" style="left:1437.7px;top:399px;letter-spacing:-0.859px;">|</span><span id="t108" class="t" style="left:1445.4px;top:399px;letter-spacing:-0.053px;">&lt;организация не определена&gt;</span><div style="left:1070px;top:421px;width:664px;height:15px;background:#f4f7fb;"></div><span id="t109" class="t" style="left:1071.3px;top:423px;letter-spacing:-0.017px;">27.05.2025 11:39:54</span><div style="left:1070px;top:445px;width:664px;height:15px;background:#f4f7fb;"></div><span id="t110" class="t" style="left:1071.3px;top:447px;letter-spacing:0.010px;">Администратор</span><span id="t111" class="t" style="left:1155.9px;top:447px;letter-spacing:-0.859px;">|</span><span id="t112" class="t" style="left:1164.3px;top:447px;letter-spacing:0.087px;">Основной администратор программного комплекса</span><span id="t113" class="t" style="left:1437.7px;top:447px;letter-spacing:-0.859px;">|</span><span id="t114" class="t" style="left:1445.4px;top:447px;letter-spacing:-0.053px;">&lt;организация не определена&gt;</span><div style="left:1070px;top:469px;width:664px;height:15px;background:#f4f7fb;"></div><span id="t115" class="t" style="left:1071.3px;top:471px;letter-spacing:-0.060px;">21.05.2025 18:24:39</span><div style="left:1070px;top:493px;width:664px;height:15px;background:#f4f7fb;"></div><span id="t116" class="t" style="left:1071.3px;top:495px;letter-spacing:0.010px;">Администратор</span><span id="t117" class="t" style="left:1155.9px;top:495px;letter-spacing:-0.859px;">|</span><span id="t118" class="t" style="left:1164.3px;top:495px;letter-spacing:0.087px;">Основной администратор программного комплекса</span><span id="t119" class="t" style="left:1437.7px;top:495px;letter-spacing:-0.859px;">|</span><span id="t120" class="t" style="left:1445.4px;top:495px;letter-spacing:-0.053px;">&lt;организация не определена&gt;</span><div style="left:1070px;top:517px;width:664px;height:15px;background:#f4f7fb;"></div><span id="t121" class="t" style="left:1071.3px;top:519px;letter-spacing:-0.060px;">27.05.2025 15:42:37</span><div style="left:1070px;top:541px;width:664px;height:15px;background:#f4f7fb;"></div><span id="t122" class="t" style="left:1071.3px;top:543px;letter-spacing:0.010px;">Администратор</span><span id="t123" class="t" style="left:1155.9px;top:543px;letter-spacing:-0.859px;">|</span><span id="t124" class="t" style="left:1164.3px;top:543px;letter-spacing:0.087px;">Основной администратор программного комплекса</span><span id="t125" class="t" style="left:1437.7px;top:543px;letter-spacing:-0.859px;">|</span><span id="t126" class="t" style="left:1445.4px;top:543px;letter-spacing:-0.053px;">&lt;организация не определена&gt;</span><div style="left:1070px;top:565px;width:664px;height:15px;background:#f4f7fb;"></div><span id="t127" class="t" style="left:1071.3px;top:567px;letter-spacing:-0.060px;">21.05.2025 18:25:17</span><div style="left:1070px;top:589px;width:664px;height:15px;background:#f4f7fb;"></div><span id="t128" class="t" style="left:1071.3px;top:591px;letter-spacing:0.010px;">Администратор</span><span id="t129" class="t" style="left:1155.9px;top:591px;letter-spacing:-0.859px;">|</span><span id="t130" class="t" style="left:1164.3px;top:591px;letter-spacing:0.087px;">Основной администратор программного комплекса</span><span id="t131" class="t" style="left:1437.7px;top:591px;letter-spacing:-0.859px;">|</span><span id="t132" class="t" style="left:1445.4px;top:591px;letter-spacing:-0.053px;">&lt;организация не определена&gt;</span><div style="left:1070px;top:613px;width:664px;height:15px;background:#f4f7fb;"></div><div style="left:1070px;top:637px;width:664px;height:15px;background:#f4f7fb;"></div><div style="left:1070px;top:661px;width:664px;height:15px;background:#f4f7fb;"></div><div style="left:1070px;top:685px;width:664px;height:15px;background:#f4f7fb;"></div><div style="left:1070px;top:709px;width:664px;height:15px;background:#f4f7fb;"></div><span id="t133" class="t" style="left:1071.3px;top:711px;letter-spacing:-0.055px;">3 час. 56 мин.</span><div style="left:1070px;top:733px;width:664px;height:15px;background:#f4f7fb;"></div><span id="t134" class="t" style="left:1071.3px;top:735px;letter-spacing:-0.279px;">{C85E1F24-D4A3-4FE1-A192-BEE614FFFFEB}</span><div style="left:1070px;top:757px;width:664px;height:15px;background:#f4f7fb;"></div><span id="t135" class="t" style="left:1071.3px;top:759px;letter-spacing:-0.201px;">BB59755B</span><div style="left:1616px;top:251px;width:120px;height:19px;background:#f0f0f0;border:1px solid #adadad;border-radius:3px;background:linear-gradient(#f4f4f4,#e9e9e9);"></div><span id="t136" class="t" style="left:1623.7px;top:255px;letter-spacing:0.084px;">Локальные сметы ...</span><div style="left:1617px;top:277px;width:120px;height:19px;background:#f0f0f0;border:1px solid #adadad;border-radius:3px;background:linear-gradient(#f4f4f4,#e9e9e9);"></div><span id="t137" class="t" style="left:1649.3px;top:281px;letter-spacing:-0.008px;">История ...</span><div style="left:1617px;top:299px;width:120px;height:19px;background:#f0f0f0;border:1px solid #adadad;border-radius:3px;background:linear-gradient(#f4f4f4,#e9e9e9);"></div><span id="t138" class="t" style="left:1631.7px;top:303px;letter-spacing:-0.059px;">Архивирование ...</span><div style="left:1553px;top:1060px;width:93px;height:24px;background:#f0f0f0;border-top:1px solid #ffffff;border-left:1px solid #ffffff;border-right:1px solid #696969;border-bottom:1px solid #696969;"></div><div style="left:1554px;top:1061px;width:91px;height:22px;background:#f0f0f0;border-right:1px solid #a0a0a0;border-bottom:1px solid #a0a0a0;"></div><span id="t139" class="t g" style="left:1571.3px;top:1066px;letter-spacing:0.106px;"><u>П</u>рименить</span><div style="left:1648px;top:1060px;width:93px;height:24px;background:#f0f0f0;border-top:1px solid #ffffff;border-left:1px solid #ffffff;border-right:1px solid #696969;border-bottom:1px solid #696969;"></div><div style="left:1649px;top:1061px;width:91px;height:22px;background:#f0f0f0;border-right:1px solid #a0a0a0;border-bottom:1px solid #a0a0a0;"></div><span id="t140" class="t g" style="left:1675.3px;top:1066px;letter-spacing:0.053px;"><u>О</u>тмена</span><div style="left:2px;top:1094px;width:85px;height:26px;background:#f0f0f0;border-top:1px solid #a0a0a0;border-left:1px solid #a0a0a0;border-right:1px solid #ffffff;border-bottom:1px solid #ffffff;"></div><div style="left:88px;top:1092px;width:1px;height:29px;background:#a0a0a0;"></div><div style="left:91px;top:1094px;width:296px;height:26px;background:#f0f0f0;border-top:1px solid #a0a0a0;border-left:1px solid #a0a0a0;border-right:1px solid #ffffff;border-bottom:1px solid #ffffff;"></div><div style="left:388px;top:1092px;width:1px;height:29px;background:#a0a0a0;"></div><div style="left:391px;top:1094px;width:1289px;height:26px;background:#f0f0f0;border-top:1px solid #a0a0a0;border-left:1px solid #a0a0a0;border-right:1px solid #ffffff;border-bottom:1px solid #ffffff;"></div><div style="left:1681px;top:1092px;width:1px;height:29px;background:#a0a0a0;"></div><div style="left:1684px;top:1094px;width:30px;height:26px;background:#f0f0f0;border-top:1px solid #a0a0a0;border-left:1px solid #a0a0a0;border-right:1px solid #ffffff;border-bottom:1px solid #ffffff;"></div><div style="left:1715px;top:1092px;width:1px;height:29px;background:#a0a0a0;"></div><div style="left:1718px;top:1094px;width:30px;height:26px;background:#f0f0f0;border-top:1px solid #a0a0a0;border-left:1px solid #a0a0a0;border-right:1px solid #ffffff;border-bottom:1px solid #ffffff;"></div><div style="left:0px;top:1121px;width:1751px;height:1px;background:#a0a0a0;"></div><svg style="left:1691px;top:1099px" width="16" height="16" viewBox="0 0 16 16"><circle cx="8" cy="8" r="8" fill="#0078d7"/><rect x="7" y="6.5" width="2" height="6.5" fill="#fff"/><circle cx="8" cy="4.2" r="1.3" fill="#fff"/></svg><span id="t141" class="m" style="left:1725.3px;top:1100px;letter-spacing:-0.972px;">RU</span><svg style="left:0;top:0" width="1751" height="1122" viewBox="0 0 1751 1122"><rect x="42.5" y="214.900" width="131.500" height="21" fill="none" stroke="#ff0000" stroke-width="3"/><path d="M175 223L668 409.6" stroke="#ff0000" stroke-width="3.6" fill="none"/><path d="M689 418L669.5 402.5L664 417z" fill="#ff0000"/></svg><svg style="left:15px;top:29px" width="16" height="16" viewBox="0 0 16 16"><path d="M4.5 4v10.5M4.5 6.5h2M4.5 10.5h2M4.5 14.5h2" stroke="#2c3f70" fill="none"/><rect x="0.5" y="1.5" width="7" height="2" fill="#f2f000" stroke="#8f8f20"/><rect x="6.5" y="5.5" width="6" height="2" fill="#a6cbf7" stroke="#5a78b6"/><rect x="6.5" y="9.5" width="6" height="2" fill="#a6cbf7" stroke="#5a78b6"/><rect x="6.5" y="13.5" width="6" height="2" fill="#a6cbf7" stroke="#5a78b6"/></svg><svg style="left:37px;top:29px" width="16" height="16" viewBox="0 0 16 16"><path d="M7.5 4v10.5M7.5 6.5h2M7.5 10.5h2M7.5 14.5h2" stroke="#8f8f8f" fill="none"/><rect x="3.5" y="1.5" width="7" height="2" fill="#ececec" stroke="#8f8f8f"/><rect x="9.5" y="5.5" width="6" height="2" fill="#ececec" stroke="#8f8f8f"/><rect x="9.5" y="9.5" width="6" height="2" fill="#ececec" stroke="#8f8f8f"/><rect x="9.5" y="13.5" width="6" height="2" fill="#ececec" stroke="#8f8f8f"/><path d="M0 10h5M3 7.5l2.8 2.5L3 12.5" stroke="#8f8f8f" stroke-width="1.6" fill="none"/></svg><svg style="left:67px;top:29px" width="16" height="16" viewBox="0 0 16 16"><rect x="0.5" y="1.5" width="13" height="13" fill="#fff" stroke="#8a8a8a"/><path d="M2.6 4.6h3l6 7h-3z" fill="#959595"/><path d="M11.4 4.6h-3l-6 7h3z" fill="#959595"/><path d="M2.4 12h9.4" stroke="#b0b0b0"/></svg><svg style="left:95px;top:29px" width="16" height="16" viewBox="0 0 16 16"><path d="M3.5 .5h8.500l3.200 2.600V15.500H3.500z" fill="#fdfdfd" stroke="#cfcfcf" stroke-width=".7"/><rect x="0" y="1.800" width="14.500" height="6" fill="#9c9c9c"/><text x="7.300" y="7" text-anchor="middle" textLength="11" lengthAdjust="spacingAndGlyphs" font-family="Liberation Sans,sans-serif" font-weight="bold" font-size="6" fill="#fff" style="text-rendering:geometricPrecision">PDF</text><path d="M4 15l4.500-5.500h2l-4.500 5.500zM8.500 15l4-5h2L11 15z" fill="#909090"/><path d="M12.500 15c.3-2 1.200-3.600 2.800-4.600" stroke="#909090" stroke-width="1.200" fill="none"/></svg><svg style="left:124px;top:29px" width="16" height="16" viewBox="0 0 16 16"><path d="M6.400 9.400L1.400 14" stroke="#e06818" stroke-width="2.500" stroke-linecap="round"/><circle cx="9.900" cy="6" r="4.400" fill="#b4ccf8" stroke="#e8955c" stroke-width=".9"/><circle cx="9.900" cy="6" r="2.400" fill="#9ab4ee"/><circle cx="8.800" cy="4.600" r="1.300" fill="#dce8ff"/></svg><svg style="left:161px;top:29px" width="16" height="16" viewBox="0 0 16 16"><path d="M0 1h12l2 2v12H0z" fill="#858585"/><rect x="2" y="8.500" width="9.800" height="5.700" fill="#e4e4e4"/><rect x="4.500" y="1" width="6" height="5" fill="#e0e0e0"/><rect x="8" y="2" width="1.500" height="3" fill="#858585"/></svg><svg style="left:184px;top:29px" width="16" height="16" viewBox="0 0 16 16"><path d="M6.700 13.300A5.700 5.700 0 0 1 2.700 3.900M6.200 2.700A5.600 5.600 0 0 1 10.700 12.100" stroke="#7e7e7e" stroke-width="1.8" fill="none"/><path d="M.8 2h4.300l-.3 4zM8.100 9.900v3.900l4-.2z" fill="#7e7e7e"/></svg><svg style="left:208px;top:29px" width="16" height="16" viewBox="0 0 16 16"><path d="M2 9.5C4 5 9.5 4.2 12.2 10.5" stroke="#858585" stroke-width="1.9" fill="none"/><path d="M0.2 5.4l.6 5.4 4.8-2z" fill="#858585"/></svg><svg style="left:237px;top:29px" width="16" height="16" viewBox="0 0 16 16"><path d="M2.5 5.5C4.5 1.2 11 1 12 7.5" stroke="#3535ea" stroke-width="2" fill="none"/><path d="M0.4 2.6l.8 5 4.4-2.2z" fill="#3535ea"/><rect x="4.5" y="9.5" width="8.5" height="6" fill="#eef0ff" stroke="#6070c0"/><path d="M6.5 11l4.6 3.4M11.1 11l-4.6 3.4M8.8 10.8v3.8" stroke="#101030" stroke-width=".9"/></svg><svg style="left:265px;top:29px" width="16" height="16" viewBox="0 0 16 16"><rect x="0.5" y="4.5" width="9" height="3" fill="#d6d6d6" stroke="#8f8f8f"/><path d="M3 6h4" stroke="#8f8f8f"/><rect x="2" y="8.5" width="9.5" height="7" fill="#8f8f8f"/><path d="M2 10.5h9.5M2 12.5h9.5M2 14.5h9.5" stroke="#b4b4b4" stroke-width=".6"/><rect x="9" y="0" width="7" height="7" rx=".8" fill="#8f8f8f"/><path d="M12.5 0.5v6.0M9.5 3.5h6.0M10.34 1.3399999999999999l4.32 4.32M14.66 1.3399999999999999l-4.32 4.32" stroke="#fff" stroke-width="1"/><circle cx="12.5" cy="3.5" r="1.89" fill="#fff"/><circle cx="12.5" cy="3.5" r="0.84" fill="#8f8f8f"/></svg><svg style="left:288px;top:29px" width="16" height="16" viewBox="0 0 16 16"><rect x="0" y="4" width="10.5" height="3.4" fill="#8f8f8f"/><rect x="2" y="8" width="9.5" height="4" fill="#a6a6a6"/><rect x="2.5" y="11.5" width="8.5" height="3.6" fill="#e0e0e0" stroke="#8f8f8f"/><path d="M4.5 13.3h4" stroke="#8f8f8f"/><rect x="9" y="0" width="7" height="7" rx=".8" fill="#8f8f8f"/><path d="M12.5 0.5v6.0M9.5 3.5h6.0M10.34 1.3399999999999999l4.32 4.32M14.66 1.3399999999999999l-4.32 4.32" stroke="#fff" stroke-width="1"/><circle cx="12.5" cy="3.5" r="1.89" fill="#fff"/><circle cx="12.5" cy="3.5" r="0.84" fill="#8f8f8f"/></svg><svg style="left:311px;top:29px" width="16" height="16" viewBox="0 0 16 16"><path d="M2 3.5h9.5a1.5 1.5 0 0 1 1.5 1.5v4.5a1.5 1.5 0 0 1-1.5 1.5H7.5L4.5 14.5V11H2A1.5 1.5 0 0 1 .5 9.5V5A1.5 1.5 0 0 1 2 3.5z" fill="#f6f6f6" stroke="#a0a0a0"/><rect x="9" y="0" width="7" height="7" rx=".8" fill="#9a9a9a"/><path d="M12.5 0.5v6.0M9.5 3.5h6.0M10.34 1.3399999999999999l4.32 4.32M14.66 1.3399999999999999l-4.32 4.32" stroke="#fff" stroke-width="1"/><circle cx="12.5" cy="3.5" r="1.89" fill="#fff"/><circle cx="12.5" cy="3.5" r="0.84" fill="#9a9a9a"/></svg><svg style="left:340px;top:29px" width="16" height="16" viewBox="0 0 16 16"><ellipse cx="7" cy="9.5" rx="6.6" ry="3.8" fill="#a0a0a0"/><rect x="4" y="3" width="7" height="5" fill="#8f8f8f"/><path d="M4.5 4.5h6M4.5 6.2h6" stroke="#d8d8d8" stroke-width=".8"/><path d="M2 10.2c3 2.2 7 2.2 10 0" stroke="#e4e4e4" fill="none"/><path d="M14.8 8v6.5" stroke="#707070"/></svg><svg style="left:363px;top:29px" width="16" height="16" viewBox="0 0 16 16"><rect x="5" y="2" width="8" height="11" fill="#8f8f8f"/><path d="M6.5 4h5M6.5 6h5M6.5 8h5" stroke="#c8c8c8" stroke-width="1" stroke-dasharray="1.5 1"/><rect x="0.5" y="8" width="7" height="6.5" fill="#9c9c9c"/><path d="M2 9v5M3.8 9v5M5.6 9v5" stroke="#d0d0d0" stroke-width=".6"/><rect x="10.5" y="11.5" width="5" height="3.6" fill="#b8b8b8" stroke="#808080"/></svg><svg style="left:526px;top:29px" width="16" height="16" viewBox="0 0 16 16"><path d="M3 3l10.4 10.4M13.4 3L3 13.4" stroke="#8e8e8e" stroke-width="1.25"/></svg><svg style="left:555px;top:29px" width="16" height="16" viewBox="0 0 16 16"><rect x="3.5" y="0.5" width="9" height="12" fill="#d8d8d8" stroke="#8f8f8f"/><rect x="4.5" y="1.8" width="7" height="2.4" fill="#808080"/><path d="M5 6h6M5 8h6M5 10h6" stroke="#a8a8a8" stroke-width="1" stroke-dasharray="1.3 .9"/><g fill="#dcdcdc" stroke="#808080" stroke-width=".8"><ellipse cx="3.2" cy="13.6" rx="3" ry="1.5"/><ellipse cx="3.2" cy="11.8" rx="3" ry="1.5"/><ellipse cx="12.6" cy="13.6" rx="3" ry="1.5"/><ellipse cx="12.6" cy="11.8" rx="3" ry="1.5"/><ellipse cx="12.6" cy="10" rx="3" ry="1.5"/></g></svg><svg style="left:578px;top:29px" width="16" height="16" viewBox="0 0 16 16"><path d="M7 .5h7.5v9H7z" fill="#f4f4f4" stroke="#a8a8a8"/><path d="M9.5 3h3M9.5 5h3" stroke="#b0b0b0" stroke-width=".7"/><path d="M4 4.5h7.5v11H.8V7.8z" fill="#f4f4f4" stroke="#a0a0a0"/><path d="M1.5 11.5h5M4 9v5" stroke="#555" stroke-width="1.7"/><path d="M7.5 13.2h3.6" stroke="#9a9a9a" stroke-width="1.4"/></svg><svg style="left:601px;top:29px" width="16" height="16" viewBox="0 0 16 16"><path d="M8 1.800v5.400M5.300 4.500h5.400" stroke="#555" stroke-width="3" stroke-linecap="round"/><rect x="4.500" y="11.400" width="7.200" height="2.200" rx="1" fill="#ababab"/></svg><svg style="left:630px;top:29px" width="16" height="16" viewBox="0 0 16 16"><path d="M3.2 1c.6 4 2.2 7 4.8 10M12.4 1c-.6 4-2.2 7-4.8 10" stroke="#ababab" stroke-width="1.2" fill="none"/><circle cx="4.3" cy="13.2" r="1.9" fill="none" stroke="#707070" stroke-width="1.1"/><circle cx="11.3" cy="13.2" r="1.9" fill="none" stroke="#707070" stroke-width="1.1"/><path d="M5.4 11.6L8 9.5l2.6 2.1" stroke="#707070" fill="none"/></svg><svg style="left:653px;top:29px" width="16" height="16" viewBox="0 0 16 16"><path d="M.8 2.500h5.500l2 2V12H.8z" fill="#f4f4f4" stroke="#a0a0a0"/><path d="M2.500 6.500h4M2.500 8.500h4" stroke="#b0b0b0" stroke-width=".9"/><path d="M6.200 4.500h6.500l2.500 2.500v8.500h-9z" fill="#f6f6f6" stroke="#a0a0a0"/><path d="M8 8.500h5.500M8 10.500h5.500M8 12.500h5.500" stroke="#a8a8a8" stroke-width=".9"/></svg><svg style="left:676px;top:29px" width="16" height="16" viewBox="0 0 16 16"><rect x="0.500" y="1.500" width="15" height="12.500" rx="1.500" fill="#a6a6a6"/><rect x="5" y="0.300" width="6" height="2.600" rx="1" fill="#c4c4c4" stroke="#8a8a8a" stroke-width=".6"/><path d="M3.500 5.500h6l2.500 2v8H3.500z" fill="#f0f0f0" stroke="#858585"/><path d="M5.300 9h4.600M5.300 11h4.600M5.300 13h4.600" stroke="#8a8a8a" stroke-width=".9"/></svg><svg style="left:823px;top:29px" width="16" height="16" viewBox="0 0 16 16"><path d="M.8 2h6l2 2v9.5h-8z" fill="#f8f8f8" stroke="#b4b4b4"/><path d="M6.5 4.5h6.5l2 2V15h-8.5z" fill="#f8f8f8" stroke="#b0b0b0"/><path d="M1 2l2-1.5M6.6 4.6l2-1.5" stroke="#c8c8c8"/></svg><svg style="left:846px;top:29px" width="16" height="16" viewBox="0 0 16 16"><rect x="0.5" y="1.5" width="15" height="12.5" rx="1.5" fill="#ffb31f" stroke="#e09a10" stroke-width=".6"/><rect x="4.5" y="0.3" width="7" height="2.6" rx="1.2" fill="#ffd35a" stroke="#d89a18" stroke-width=".6"/><path d="M5.5 4.5h7V15.5H3.5V6.5z" fill="#c8ecec" stroke="#6e9c9c"/><path d="M3.6 6.6h2V4.6" stroke="#6e9c9c" fill="#eafafa" stroke-width=".7"/></svg><svg style="left:941px;top:29px" width="16" height="16" viewBox="0 0 16 16"><path d="M.6 10.2L6.4 1.6l8.2 3.2-5.2 8.4z" fill="#858585"/><path d="M.6 10.2l8.8 3 5.2-8.4v1.9l-5 8.3-9-3.1z" fill="#e2e2e2" stroke="#a8a8a8" stroke-width=".5"/><path d="M4.6 3.4l2.6 1" stroke="#c4c4c4"/><rect x="9" y="1" width="7" height="7" rx=".8" fill="#9a9a9a"/><path d="M12.5 1.5v6.0M9.5 4.5h6.0M10.34 2.34l4.32 4.32M14.66 2.34l-4.32 4.32" stroke="#fff" stroke-width="1"/><circle cx="12.5" cy="4.5" r="1.89" fill="#fff"/><circle cx="12.5" cy="4.5" r="0.84" fill="#9a9a9a"/></svg><svg style="left:964px;top:29px" width="16" height="16" viewBox="0 0 16 16"><rect x="0.5" y="1.5" width="15" height="13" fill="#fff" stroke="#a6a6a6"/><text x="7" y="12.8" textLength="4.6" lengthAdjust="spacingAndGlyphs" font-family="Liberation Sans,sans-serif" font-size="8" fill="#000">P</text><rect x="0" y="0" width="7" height="7" rx=".8" fill="#9a9a9a"/><path d="M3.5 0.5v6.0M0.5 3.5h6.0M1.3399999999999999 1.3399999999999999l4.32 4.32M5.66 1.3399999999999999l-4.32 4.32" stroke="#fff" stroke-width="1"/><circle cx="3.5" cy="3.5" r="1.89" fill="#fff"/><circle cx="3.5" cy="3.5" r="0.84" fill="#9a9a9a"/></svg><svg style="left:987px;top:29px" width="16" height="16" viewBox="0 0 16 16"><rect x="0.5" y="1.5" width="15" height="13" fill="#fff" stroke="#a6a6a6"/><text x="2.8" y="12.8" textLength="11" lengthAdjust="spacingAndGlyphs" font-family="Liberation Sans,sans-serif" font-size="8" fill="#000">ПР</text><rect x="0" y="0" width="7" height="7" rx=".8" fill="#9a9a9a"/><path d="M3.5 0.5v6.0M0.5 3.5h6.0M1.3399999999999999 1.3399999999999999l4.32 4.32M5.66 1.3399999999999999l-4.32 4.32" stroke="#fff" stroke-width="1"/><circle cx="3.5" cy="3.5" r="1.89" fill="#fff"/><circle cx="3.5" cy="3.5" r="0.84" fill="#9a9a9a"/></svg><svg style="left:1016px;top:29px" width="16" height="16" viewBox="0 0 16 16"><path d="M4.5 4v10.5M4.5 6.5h2M4.5 10.5h2M4.5 14.5h2" stroke="#8f8f8f" fill="none"/><rect x="0.5" y="1.5" width="7" height="2" fill="#ececec" stroke="#8f8f8f"/><rect x="6.5" y="5.5" width="6" height="2" fill="#ececec" stroke="#8f8f8f"/><rect x="6.5" y="9.5" width="6" height="2" fill="#ececec" stroke="#8f8f8f"/><rect x="6.5" y="13.5" width="6" height="2" fill="#ececec" stroke="#8f8f8f"/><path d="M7.5 6.5l6-5.2 1.2 1.3-6 5.2z" fill="#c8c8c8" stroke="#8a8a8a" stroke-width=".7"/></svg><svg style="left:1039px;top:29px" width="16" height="16" viewBox="0 0 16 16"><path d="M4.5 4v10.5M4.5 6.5h2M4.5 10.5h2M4.5 14.5h2" stroke="#8f8f8f" fill="none"/><rect x="0.5" y="1.5" width="7" height="2" fill="#ececec" stroke="#8f8f8f"/><rect x="6.5" y="5.5" width="6" height="2" fill="#ececec" stroke="#8f8f8f"/><rect x="6.5" y="9.5" width="6" height="2" fill="#ececec" stroke="#8f8f8f"/><rect x="6.5" y="13.5" width="6" height="2" fill="#ececec" stroke="#8f8f8f"/><path d="M11.5 2l4 4M15.5 2l-4 4" stroke="#8f8f8f" stroke-width="1"/></svg><svg style="left:1075px;top:29px" width="16" height="16" viewBox="0 0 16 16"><path d="M4 5.5H16" stroke="#5a6286" stroke-width="1"/><path d="M4 8.5H16" stroke="#5a6286" stroke-width="1"/><path d="M4 11.5H16" stroke="#5a6286" stroke-width="1"/><path d="M4 14.5H16" stroke="#5a6286" stroke-width="1"/><path d="M0 5h4.5" stroke="#0a2fd6" stroke-width="2"/><path d="M3 1.8L6.8 5 3 8.2z" fill="#0a2fd6"/></svg><svg style="left:1098px;top:29px" width="16" height="16" viewBox="0 0 16 16"><path d="M4 5.5H16" stroke="#5a6286" stroke-width="1"/><path d="M4 8.5H16" stroke="#5a6286" stroke-width="1"/><path d="M4 11.5H16" stroke="#5a6286" stroke-width="1"/><path d="M4 14.5H16" stroke="#5a6286" stroke-width="1"/><path d="M3.2 4.5V9" stroke="#0a2fd6" stroke-width="2.2"/><path d="M0 5.5L3.2 1.6l3.2 3.9z" fill="#0a2fd6"/></svg><svg style="left:1121px;top:29px" width="16" height="16" viewBox="0 0 16 16"><path d="M4 5.5H16" stroke="#5a6286" stroke-width="1"/><path d="M4 8.5H16" stroke="#5a6286" stroke-width="1"/><path d="M4 11.5H16" stroke="#5a6286" stroke-width="1"/><path d="M4 14.5H16" stroke="#5a6286" stroke-width="1"/><path d="M3.2 8.5V13" stroke="#0a2fd6" stroke-width="2.2"/><path d="M0 12l3.2 3.9L6.4 12z" fill="#0a2fd6"/></svg><svg style="left:1144px;top:29px" width="16" height="16" viewBox="0 0 16 16"><path d="M4 5.5H16" stroke="#5a6286" stroke-width="1"/><path d="M4 8.5H16" stroke="#5a6286" stroke-width="1"/><path d="M4 11.5H16" stroke="#5a6286" stroke-width="1"/><path d="M4 14.5H16" stroke="#5a6286" stroke-width="1"/><path d="M0 13h4.5" stroke="#0a2fd6" stroke-width="2"/><path d="M3 9.8L6.8 13 3 16.2z" fill="#0a2fd6"/></svg><svg style="left:1181px;top:29px" width="16" height="16" viewBox="0 0 16 16"><path d="M9.5 1.2c6 1.6 7 9.4 1.6 12.6-2.6 1.4-5.6 1-7.4-.4" stroke="#9fb4b4" stroke-width="1.5" fill="none"/><path d="M1.4 14.2L9.8 5.4" stroke="#d98a2c" stroke-width="1.9"/><path d="M3.2 3.6l5.6-2 1.6 1.2-1 1.4 5.4 9.4" stroke="#5a5a5a" stroke-width="1.5" fill="none"/><path d="M9.4 4.2l5 9" stroke="#b87430" stroke-width="1.2"/></svg><svg style="left:1203px;top:30px" width="16" height="16" viewBox="0 0 16 16"><path d="M1 14.6h15" stroke="#404040" stroke-width="1.2" opacity=".55"/><path d="M0.5 6.2l8.5-1.2v6.5H0.5z" fill="#1f7fe6"/><path d="M0.5 6.2l8.5-1.2v2.2l-8.5 1z" fill="#4aa0ff"/><path d="M9 11.5V5.6l2-1.6h2.6l2 3v4.5z" fill="#f59a23"/><path d="M11.3 5h2l1.3 2.2h-3.3z" fill="#bfe8ff"/><circle cx="3.7" cy="12" r="2" fill="#111"/><circle cx="3.7" cy="12" r=".8" fill="#ffe84a"/><circle cx="13" cy="12" r="2" fill="#111"/><circle cx="13" cy="12" r=".8" fill="#ffe84a"/></svg><svg style="left:1226px;top:32px" width="16" height="16" viewBox="0 0 16 16"><ellipse cx="8" cy="2.6" rx="2.5" ry="1.6" fill="#e85f08"/><ellipse cx="8" cy="2.2" rx="1.3" ry=".5" fill="#ffa24e"/><ellipse cx="5.6" cy="5.2" rx="2.5" ry="1.6" fill="#e85f08"/><ellipse cx="5.6" cy="4.8" rx="1.3" ry=".5" fill="#ffa24e"/><ellipse cx="10.4" cy="5.2" rx="2.5" ry="1.6" fill="#e85f08"/><ellipse cx="10.4" cy="4.8" rx="1.3" ry=".5" fill="#ffa24e"/><ellipse cx="2.6" cy="7.8" rx="2.5" ry="1.6" fill="#e85f08"/><ellipse cx="2.6" cy="7.3999999999999995" rx="1.3" ry=".5" fill="#ffa24e"/><ellipse cx="6.2" cy="7.8" rx="2.5" ry="1.6" fill="#e85f08"/><ellipse cx="6.2" cy="7.3999999999999995" rx="1.3" ry=".5" fill="#ffa24e"/><ellipse cx="9.8" cy="7.8" rx="2.5" ry="1.6" fill="#e85f08"/><ellipse cx="9.8" cy="7.3999999999999995" rx="1.3" ry=".5" fill="#ffa24e"/><ellipse cx="13.4" cy="7.8" rx="2.5" ry="1.6" fill="#e85f08"/><ellipse cx="13.4" cy="7.3999999999999995" rx="1.3" ry=".5" fill="#ffa24e"/></svg><svg style="left:1255px;top:30px" width="16" height="16" viewBox="0 0 16 16"><path d="M1 14.6h15" stroke="#404040" stroke-width="1.2" opacity=".55"/><path d="M0.5 6.2l8.5-1.2v6.5H0.5z" fill="#1f7fe6"/><path d="M0.5 6.2l8.5-1.2v2.2l-8.5 1z" fill="#4aa0ff"/><path d="M9 11.5V5.6l2-1.6h2.6l2 3v4.5z" fill="#f59a23"/><path d="M11.3 5h2l1.3 2.2h-3.3z" fill="#bfe8ff"/><circle cx="3.7" cy="12" r="2" fill="#111"/><circle cx="3.7" cy="12" r=".8" fill="#ffe84a"/><circle cx="13" cy="12" r="2" fill="#111"/><circle cx="13" cy="12" r=".8" fill="#ffe84a"/><ellipse cx="4" cy="4.6" rx="2" ry="1.3" fill="#e8640a"/><ellipse cx="6.6" cy="3.4" rx="2" ry="1.3" fill="#f07818"/><ellipse cx="7.6" cy="5" rx="1.6" ry="1" fill="#e8640a"/></svg><svg style="left:1291px;top:30px" width="16" height="16" viewBox="0 0 16 16"><path d="M.8 8.600l8.700-2.400 6 1.800v1.600l-8.700 3.600L.8 10.600z" fill="#fff" stroke="#f03c3c" stroke-width="1.100"/><path d="M1.600 9.900l5.200 2 8-3.300" stroke="#b9c7d8" stroke-width=".8" fill="none"/><path d="M2.600 3.400L10.200 1l5 1.800v3.400L7.400 9 2.600 6.800z" fill="#fff" stroke="#f7a6c8" stroke-width=".6"/><path d="M3.400 6.600l4 1.700 7.400-2.800" stroke="#c4cedc" stroke-width=".7" fill="none"/><path d="M2.600 3.400L10.200 1l5 1.800-7.800 2.700z" fill="#f058a8"/><path d="M2.600 3.400v1.500l4.800 2.200V5.500z" fill="#f058a8"/></svg><svg style="left:1314px;top:30px" width="16" height="16" viewBox="0 0 16 16"><path d="M.8 8.600l8.700-2.400 6 1.800v1.600l-8.700 3.600L.8 10.600z" fill="#fff" stroke="#2aa4f4" stroke-width="1.100"/><path d="M1.600 9.900l5.200 2 8-3.300" stroke="#b9c7d8" stroke-width=".8" fill="none"/><path d="M2.600 3.400L10.200 1l5 1.800v3.400L7.400 9 2.600 6.800z" fill="#fff" stroke="#9ab8f0" stroke-width=".6"/><path d="M3.400 6.600l4 1.700 7.400-2.800" stroke="#c4cedc" stroke-width=".7" fill="none"/><path d="M2.600 3.400L10.200 1l5 1.800-7.800 2.700z" fill="#1f3fd0"/><path d="M2.600 3.400v1.500l4.800 2.200V5.500z" fill="#1f3fd0"/></svg><svg style="left:114px;top:107px" width="16" height="16" viewBox="0 0 16 16"><path d="M.5 1.5h5.5l1.2 1.8h8.3v11.2H.5z" fill="#ffd447" stroke="#c79a2d"/><path d="M1 4h14" stroke="#ffe98a"/><path d="M5.8 11.5V7.4M3.4 9l2.4-2.6L8.2 9M5.8 11.6h5" stroke="#4a3a10" stroke-width="1.4" fill="none"/></svg><svg style="left:137px;top:107px" width="16" height="16" viewBox="0 0 16 16"><path d="M.5 1.5h5.5l1.2 1.8h8.3v11.2H.5z" fill="#86dd34" stroke="#5aa61c"/><path d="M1 4h14" stroke="#b6f070"/><path d="M5.6 8.4h4.4" stroke="#2a4a10" stroke-width="1.5"/></svg><svg style="left:174px;top:107px" width="16" height="16" viewBox="0 0 16 16"><path d="M6.700 13.300A5.700 5.700 0 0 1 2.700 3.900M6.200 2.700A5.600 5.600 0 0 1 10.700 12.100" stroke="#1f9f1f" stroke-width="2" fill="none"/><path d="M.8 2h4.300l-.3 4zM8.100 9.900v3.900l4-.2z" fill="#168a16"/></svg><svg style="left:205px;top:107px" width="16" height="16" viewBox="0 0 16 16"><rect x="0.5" y="7" width="4.6" height="8.5" fill="#b4b4b4" stroke="#9a9a9a" stroke-width=".6"/><rect x="5.4" y="3" width="4.6" height="12.5" fill="#a8a8a8" stroke="#909090" stroke-width=".6"/><rect x="10.2" y="8" width="4.6" height="7.5" fill="#b4b4b4" stroke="#9a9a9a" stroke-width=".6"/><path d="M.6 9.5h14M.6 12h14M.6 14h14" stroke="#e0e0e0" stroke-width=".7"/><path d="M5.5 1.2l1.2 1.8" stroke="#555"/><rect x="8" y="1" width="7" height="7" rx=".8" fill="#9a9a9a"/><path d="M11.5 1.5v6.0M8.5 4.5h6.0M9.34 2.34l4.32 4.32M13.66 2.34l-4.32 4.32" stroke="#fff" stroke-width="1"/><circle cx="11.5" cy="4.5" r="1.89" fill="#fff"/><circle cx="11.5" cy="4.5" r="0.84" fill="#9a9a9a"/></svg><svg style="left:227px;top:107px" width="16" height="16" viewBox="0 0 16 16"><rect x="0.5" y="1.5" width="5.6" height="13.5" fill="#dcdcdc" stroke="#b4b4b4" stroke-width=".7"/><path d="M.8 3.5h5M.8 5.5h5M.8 7.5h5M.8 9.5h5M.8 11.5h5M.8 13.5h5" stroke="#c0c0c0" stroke-width=".6"/><rect x="9.5" y="8" width="6" height="7.5" fill="#d6d6d6" stroke="#a0a0a0" stroke-width=".7"/><path d="M10 10h5M10 12h5M10 14h5" stroke="#9a9a9a" stroke-width=".8"/><rect x="8" y="1" width="7" height="7" rx=".8" fill="#9a9a9a"/><path d="M11.5 1.5v6.0M8.5 4.5h6.0M9.34 2.34l4.32 4.32M13.66 2.34l-4.32 4.32" stroke="#fff" stroke-width="1"/><circle cx="11.5" cy="4.5" r="1.89" fill="#fff"/><circle cx="11.5" cy="4.5" r="0.84" fill="#9a9a9a"/></svg><svg style="left:250px;top:107px" width="16" height="16" viewBox="0 0 16 16"><rect x="4.5" y="3.5" width="6" height="12" fill="#e0e0e0" stroke="#b4b4b4" stroke-width=".7"/><path d="M5 6h5M5 8h5M5 10h5M5 12h5M5 14h5" stroke="#c4c4c4" stroke-width=".6"/><rect x="8" y="1" width="7" height="7" rx=".8" fill="#9a9a9a"/><path d="M11.5 1.5v6.0M8.5 4.5h6.0M9.34 2.34l4.32 4.32M13.66 2.34l-4.32 4.32" stroke="#fff" stroke-width="1"/><circle cx="11.5" cy="4.5" r="1.89" fill="#fff"/><circle cx="11.5" cy="4.5" r="0.84" fill="#9a9a9a"/></svg><svg style="left:274px;top:107px" width="16" height="16" viewBox="0 0 16 16"><defs><linearGradient id="bm2" x1="0" y1="0" x2="0" y2="1"><stop offset="0" stop-color="#ffa030"/><stop offset="1" stop-color="#b84408"/></linearGradient></defs><path d="M0 1.200h8" stroke="#808080" stroke-width=".9"/><rect x="0" y="1" width="2.600" height="14.700" fill="#808080"/><path d="M0 15.400h4.500" stroke="#808080" stroke-width=".9"/><path d="M.7 3.100h1.200M.7 5.600h1.200M.7 8.100h1.200M.7 10.600h1.200M.7 13.100h1.200" stroke="#fff" stroke-width="1.300"/><circle cx=".7" cy="1" r="1" fill="none" stroke="#8a4af0" stroke-width=".7"/><path d="M3 8.500L7.500 3" stroke="#7a2030" stroke-width=".8"/><circle cx="7.600" cy="4.200" r="1.500" fill="#a070f0"/><rect x="6" y="7" width="3.600" height="9" fill="#2a86ff"/><rect x="11" y="7" width="4" height="9" fill="#2a86ff"/><path d="M7 12h1.600M7 14.300h1.600M12 12h2M12 14.300h2" stroke="#d8e8ff" stroke-width="1" stroke-dasharray=".8 .6"/><rect x="3" y="8" width="11.500" height="2.700" fill="url(#bm2)"/><rect x="8" y="0" width="7" height="7" rx=".8" fill="#ff9a1e"/><path d="M11.5 0.5v6.0M8.5 3.5h6.0M9.34 1.3399999999999999l4.32 4.32M13.66 1.3399999999999999l-4.32 4.32" stroke="#fff" stroke-width="1"/><circle cx="11.5" cy="3.5" r="1.89" fill="#fff"/><circle cx="11.5" cy="3.5" r="0.84" fill="#ff9a1e"/></svg><svg style="left:297px;top:107px" width="16" height="16" viewBox="0 0 16 16"><defs><linearGradient id="bm2" x1="0" y1="0" x2="0" y2="1"><stop offset="0" stop-color="#ffa030"/><stop offset="1" stop-color="#b84408"/></linearGradient></defs><path d="M0 1.200h8" stroke="#808080" stroke-width=".9"/><rect x="0" y="1" width="2.600" height="14.700" fill="#808080"/><path d="M0 15.400h4.500" stroke="#808080" stroke-width=".9"/><path d="M.7 3.100h1.200M.7 5.600h1.200M.7 8.100h1.200M.7 10.600h1.200M.7 13.100h1.200" stroke="#fff" stroke-width="1.300"/><circle cx=".7" cy="1" r="1" fill="none" stroke="#8a4af0" stroke-width=".7"/><path d="M3 6.500L7 2.500" stroke="#7a2030" stroke-width=".8"/><circle cx="7.300" cy="4" r="1.300" fill="#a070f0"/><rect x="3" y="5" width="9" height="2.400" fill="url(#bm2)"/><rect x="11.400" y="7" width="3.700" height="9" fill="#2a86ff"/><path d="M12.300 8.500h1M12.300 10.800h1M12.300 13.100h1M14 9.600h.8M14 12h.8" stroke="#e0eeff" stroke-width="1"/><defs><linearGradient id="rl" x1="0" y1="0" x2="0" y2="1"><stop offset="0" stop-color="#48a8ff"/><stop offset="1" stop-color="#0018f0"/></linearGradient></defs><rect x="4" y="8.3" width="7" height="3.700" rx=".8" fill="url(#rl)"/><path d="M11 9.5c1.800 0 1.800 3.800 0 3.800h-2.500" stroke="#101010" fill="none" stroke-width="1.200"/><rect x="6.4" y="13.9" width="2.600" height="2.200" rx=".6" fill="#f01818"/><rect x="8" y="0" width="7" height="7" rx=".8" fill="#ff9a1e"/><path d="M11.5 0.5v6.0M8.5 3.5h6.0M9.34 1.3399999999999999l4.32 4.32M13.66 1.3399999999999999l-4.32 4.32" stroke="#fff" stroke-width="1"/><circle cx="11.5" cy="3.5" r="1.89" fill="#fff"/><circle cx="11.5" cy="3.5" r="0.84" fill="#ff9a1e"/></svg><svg style="left:319px;top:107px" width="16" height="16" viewBox="0 0 16 16"><path d="M.5 10L8 .5h2l6 7-7.500 6.500z" fill="#3c9c6c"/><path d="M8 .5h2l1.500 1.800-2 .2z" fill="#2a7c50"/><path d="M9.500 3.500l2 1.500" stroke="#d8f0e4" stroke-width="1.200"/><path d="M.5 10l8 4L16 7.500v2.200L8.500 16.200.5 12.300z" fill="#ececf0" stroke="#b4b4c0" stroke-width=".6"/><rect x="9" y="1" width="7" height="7" rx=".8" fill="#ff9a1e"/><path d="M12.5 1.5v6.0M9.5 4.5h6.0M10.34 2.34l4.32 4.32M14.66 2.34l-4.32 4.32" stroke="#fff" stroke-width="1"/><circle cx="12.5" cy="4.5" r="1.89" fill="#fff"/><circle cx="12.5" cy="4.5" r="0.84" fill="#ff9a1e"/></svg><svg style="left:342px;top:107px" width="16" height="16" viewBox="0 0 16 16"><path d="M.5 10L8 .5h2l6 7-7.500 6.500z" fill="#3c9c6c"/><path d="M8 .5h2l1.500 1.800-2 .2z" fill="#2a7c50"/><path d="M9.500 3.500l2 1.500" stroke="#d8f0e4" stroke-width="1.200"/><path d="M.5 10l8 4L16 7.500v2.200L8.500 16.200.5 12.300z" fill="#ececf0" stroke="#b4b4c0" stroke-width=".6"/><defs><linearGradient id="rl" x1="0" y1="0" x2="0" y2="1"><stop offset="0" stop-color="#48a8ff"/><stop offset="1" stop-color="#0018f0"/></linearGradient></defs><rect x="3.5" y="7.8" width="7" height="3.700" rx=".8" fill="url(#rl)"/><path d="M10.5 9.0c1.800 0 1.800 3.800 0 3.800h-2.500" stroke="#101010" fill="none" stroke-width="1.200"/><rect x="5.9" y="13.399999999999999" width="2.600" height="2.200" rx=".6" fill="#f01818"/><rect x="9" y="1" width="7" height="7" rx=".8" fill="#ff9a1e"/><path d="M12.5 1.5v6.0M9.5 4.5h6.0M10.34 2.34l4.32 4.32M14.66 2.34l-4.32 4.32" stroke="#fff" stroke-width="1"/><circle cx="12.5" cy="4.5" r="1.89" fill="#fff"/><circle cx="12.5" cy="4.5" r="0.84" fill="#ff9a1e"/></svg><svg style="left:372px;top:107px" width="16" height="16" viewBox="0 0 16 16"><path d="M1.5 8.5L8 2l6.5 6.5" stroke="#c86a1e" stroke-width="1.6" fill="none"/><rect x="3" y="1.5" width="2" height="4" fill="#f0a030"/><path d="M3 8.2L8 3.4l5 4.8V15H3z" fill="#fff" stroke="#9a9a9a" stroke-width=".8"/><rect x="4.6" y="9" width="2.6" height="6" fill="#ffb020" stroke="#c07818" stroke-width=".6"/><rect x="9" y="8.6" width="3" height="3.2" fill="#4a90ff"/><path d="M1 15.3h14" stroke="#707070"/><rect x="8" y="1" width="7" height="7" rx=".8" fill="#ff9a1e"/><path d="M11.5 1.5v6.0M8.5 4.5h6.0M9.34 2.34l4.32 4.32M13.66 2.34l-4.32 4.32" stroke="#fff" stroke-width="1"/><circle cx="11.5" cy="4.5" r="1.89" fill="#fff"/><circle cx="11.5" cy="4.5" r="0.84" fill="#ff9a1e"/></svg><svg style="left:395px;top:107px" width="16" height="16" viewBox="0 0 16 16"><path d="M1.5 8.5L8 2l6.5 6.5" stroke="#c86a1e" stroke-width="1.6" fill="none"/><rect x="3" y="1.5" width="2" height="4" fill="#f0a030"/><path d="M3 8.2L8 3.4l5 4.8V15H3z" fill="#fff" stroke="#9a9a9a" stroke-width=".8"/><path d="M1 15.3h14" stroke="#707070"/><defs><linearGradient id="rl" x1="0" y1="0" x2="0" y2="1"><stop offset="0" stop-color="#48a8ff"/><stop offset="1" stop-color="#0018f0"/></linearGradient></defs><rect x="3.2" y="7.4" width="7" height="3.700" rx=".8" fill="url(#rl)"/><path d="M10.2 8.6c1.800 0 1.800 3.800 0 3.800h-2.500" stroke="#101010" fill="none" stroke-width="1.200"/><rect x="5.6" y="13.0" width="2.600" height="2.200" rx=".6" fill="#f01818"/><rect x="8" y="1" width="7" height="7" rx=".8" fill="#ff9a1e"/><path d="M11.5 1.5v6.0M8.5 4.5h6.0M9.34 2.34l4.32 4.32M13.66 2.34l-4.32 4.32" stroke="#fff" stroke-width="1"/><circle cx="11.5" cy="4.5" r="1.89" fill="#fff"/><circle cx="11.5" cy="4.5" r="0.84" fill="#ff9a1e"/></svg><svg style="left:423px;top:107px" width="16" height="16" viewBox="0 0 16 16"><rect x="0.5" y="1.5" width="15" height="13" fill="#fff" stroke="#a6a6a6"/><text x="7" y="12.8" textLength="4.6" lengthAdjust="spacingAndGlyphs" font-family="Liberation Sans,sans-serif" font-size="8" fill="#000">P</text><rect x="0" y="0" width="7" height="7" rx=".8" fill="#9a9a9a"/><path d="M3.5 0.5v6.0M0.5 3.5h6.0M1.3399999999999999 1.3399999999999999l4.32 4.32M5.66 1.3399999999999999l-4.32 4.32" stroke="#fff" stroke-width="1"/><circle cx="3.5" cy="3.5" r="1.89" fill="#fff"/><circle cx="3.5" cy="3.5" r="0.84" fill="#9a9a9a"/></svg><svg style="left:446px;top:107px" width="16" height="16" viewBox="0 0 16 16"><rect x="0.5" y="1.5" width="15" height="13" fill="#fff" stroke="#a6a6a6"/><text x="2.8" y="12.8" textLength="11" lengthAdjust="spacingAndGlyphs" font-family="Liberation Sans,sans-serif" font-size="8" fill="#000">ПР</text><rect x="0" y="0" width="7" height="7" rx=".8" fill="#9a9a9a"/><path d="M3.5 0.5v6.0M0.5 3.5h6.0M1.3399999999999999 1.3399999999999999l4.32 4.32M5.66 1.3399999999999999l-4.32 4.32" stroke="#fff" stroke-width="1"/><circle cx="3.5" cy="3.5" r="1.89" fill="#fff"/><circle cx="3.5" cy="3.5" r="0.84" fill="#9a9a9a"/></svg><svg style="left:470px;top:107px" width="16" height="16" viewBox="0 0 16 16"><path d="M6.5 1.8L11.8 8H8.3v6.4H4.7V8H1.2z" fill="#949494"/></svg><svg style="left:493px;top:107px" width="16" height="16" viewBox="0 0 16 16"><path d="M6.5 14.4L11.8 8.2H8.3V1.8H4.7v6.4H1.2z" fill="#949494"/></svg><svg style="left:521px;top:107px" width="16" height="16" viewBox="0 0 16 16"><path d="M4.600 8.500L8 3l3.400 5.500v3h-6.800z" fill="#fff"/><path d="M3.600 9L8 2.300 12.400 9" stroke="#8a3a14" stroke-width="1.100" fill="none"/><path d="M6 1v3" stroke="#8a3a14" stroke-width="1.200"/><rect x="8.300" y="6.300" width="2.400" height="2.400" fill="#8ec4ff"/><rect x="6.200" y="7" width="1.200" height="2.500" fill="#e0a050"/><path d="M1.400 12.500L3.800 9.800l2.400 2.700V16H1.400z" fill="#fff"/><path d="M.3 13L3.800 9.200 7.300 13" stroke="#8a3a14" stroke-width="1.100" fill="none"/><rect x="3" y="13.300" width="1.500" height="2.700" fill="#e8a040"/><path d="M9.600 12.500l2.400-2.700 2.400 2.700V16H9.600z" fill="#fff"/><path d="M8.500 13L12 9.200 15.500 13" stroke="#8a3a14" stroke-width="1.100" fill="none"/><rect x="11.200" y="13.300" width="1.500" height="2.700" fill="#e8a040"/><path d="M1.400 16h4.800M9.600 16h4.800" stroke="#b8b8b8" stroke-width=".8"/></svg><svg style="left:544px;top:107px" width="16" height="16" viewBox="0 0 16 16"><rect x="2.5" y="2.5" width="13" height="11.5" fill="#7cc4b0" stroke="#4a9a86" stroke-width=".7"/><rect x="0.5" y="3.5" width="13" height="11.5" fill="#3fa88e" stroke="#2a8a72" stroke-width=".7"/><text x="7" y="13" text-anchor="middle" font-family="Liberation Sans,sans-serif" font-size="10" fill="#fff">%</text><rect x="8" y="1" width="7" height="7" rx=".8" fill="#ff9a1e"/><path d="M11.5 1.5v6.0M8.5 4.5h6.0M9.34 2.34l4.32 4.32M13.66 2.34l-4.32 4.32" stroke="#fff" stroke-width="1"/><circle cx="11.5" cy="4.5" r="1.89" fill="#fff"/><circle cx="11.5" cy="4.5" r="0.84" fill="#ff9a1e"/></svg><svg style="left:573px;top:107px" width="16" height="16" viewBox="0 0 16 16"><rect x="0.5" y="1.5" width="15" height="13" fill="#e2f3ee" stroke="#a6a6a6"/><text x="2.6" y="13.4" textLength="10" lengthAdjust="spacingAndGlyphs" font-family="Liberation Sans,sans-serif" font-size="13" fill="#000">%</text><rect x="9" y="0" width="7" height="7" rx=".8" fill="#ff9a1e"/><path d="M12.5 0.5v6.0M9.5 3.5h6.0M10.34 1.3399999999999999l4.32 4.32M14.66 1.3399999999999999l-4.32 4.32" stroke="#fff" stroke-width="1"/><circle cx="12.5" cy="3.5" r="1.89" fill="#fff"/><circle cx="12.5" cy="3.5" r="0.84" fill="#ff9a1e"/></svg><svg style="left:596px;top:107px" width="16" height="16" viewBox="0 0 16 16"><rect x="0.5" y="1.5" width="15" height="13" fill="#dff1dc" stroke="#a6a6a6"/><text x="0.6" y="13.8" textLength="15" lengthAdjust="spacingAndGlyphs" font-family="Liberation Sans,sans-serif" font-size="11" fill="#000">М29</text><rect x="9" y="0" width="7" height="7" rx=".8" fill="#ff9a1e"/><path d="M12.5 0.5v6.0M9.5 3.5h6.0M10.34 1.3399999999999999l4.32 4.32M14.66 1.3399999999999999l-4.32 4.32" stroke="#fff" stroke-width="1"/><circle cx="12.5" cy="3.5" r="1.89" fill="#fff"/><circle cx="12.5" cy="3.5" r="0.84" fill="#ff9a1e"/></svg><svg style="left:619px;top:107px" width="16" height="16" viewBox="0 0 16 16"><rect x="0.5" y="1.5" width="15" height="13" fill="#dde8f7" stroke="#a6a6a6"/><text x="2.6" y="13.8" textLength="11.5" lengthAdjust="spacingAndGlyphs" font-family="Liberation Sans,sans-serif" font-size="11" fill="#000">РР</text><rect x="9" y="0" width="7" height="7" rx=".8" fill="#ff9a1e"/><path d="M12.5 0.5v6.0M9.5 3.5h6.0M10.34 1.3399999999999999l4.32 4.32M14.66 1.3399999999999999l-4.32 4.32" stroke="#fff" stroke-width="1"/><circle cx="12.5" cy="3.5" r="1.89" fill="#fff"/><circle cx="12.5" cy="3.5" r="0.84" fill="#ff9a1e"/></svg><svg style="left:642px;top:107px" width="16" height="16" viewBox="0 0 16 16"><rect x="0.5" y="1.5" width="15" height="13" fill="#dff1dc" stroke="#a6a6a6"/><text x="2" y="13.6" textLength="12.5" lengthAdjust="spacingAndGlyphs" font-family="Liberation Sans,sans-serif" font-size="11" fill="#000">ФЗ</text><rect x="9" y="0" width="7" height="7" rx=".8" fill="#ff9a1e"/><path d="M12.5 0.5v6.0M9.5 3.5h6.0M10.34 1.3399999999999999l4.32 4.32M14.66 1.3399999999999999l-4.32 4.32" stroke="#fff" stroke-width="1"/><circle cx="12.5" cy="3.5" r="1.89" fill="#fff"/><circle cx="12.5" cy="3.5" r="0.84" fill="#ff9a1e"/></svg><svg style="left:671px;top:107px" width="16" height="16" viewBox="0 0 16 16"><path d="M.5 2h5l1.5 2h8.5v10.5H.5z" fill="#9c9c9c"/><path d="M.5 6.5h15" stroke="#b4b4b4"/><rect x="9" y="0" width="7" height="7" rx=".8" fill="#a8a8a8"/><path d="M12.5 0.5v6.0M9.5 3.5h6.0M10.34 1.3399999999999999l4.32 4.32M14.66 1.3399999999999999l-4.32 4.32" stroke="#fff" stroke-width="1"/><circle cx="12.5" cy="3.5" r="1.89" fill="#fff"/><circle cx="12.5" cy="3.5" r="0.84" fill="#a8a8a8"/></svg><svg style="left:701px;top:107px" width="16" height="16" viewBox="0 0 16 16"><path d="M1.8 2.6L12.6 13M12.8 2.4L1.6 13.2" stroke="#f0401e" stroke-width="1.7" stroke-linecap="round"/></svg><svg style="left:24px;top:155px" width="16" height="16" viewBox="0 0 16 16"><path d="M0 12.6L5.6 .8 11 12.6z" fill="#2f7fe0"/><path d="M5.6 .8L11 12.6H8z" fill="#1c5cc0"/><rect x="9.5" y="6.5" width="5" height="5.8" fill="#58b02c" stroke="#3c8a1c" stroke-width=".6"/><circle cx="7" cy="10.4" r="3.4" fill="#f03222"/><circle cx="6" cy="9.2" r="1.2" fill="#ff9a8a"/></svg><svg style="left:44px;top:170px" width="16" height="16" viewBox="0 0 16 16"><path d="M5.3 1v3.200" stroke="#404040" stroke-width=".8"/><path d="M5.600 1l4.400 1-4.400 1.100z" fill="#f01414"/><rect x="0" y="8" width="4.800" height="8" fill="#3a86ea"/><rect x="5" y="4" width="5" height="12" fill="#2c7be0"/><rect x="10.300" y="8" width="4.700" height="8" fill="#3a86ea"/><rect x="1" y="9.5" width="2.8" height="1.1" fill="#dbe6ff"/><rect x="1" y="11.5" width="2.8" height="1.1" fill="#dbe6ff"/><rect x="1" y="13.5" width="2.8" height="1.1" fill="#dbe6ff"/><rect x="6" y="5.5" width="3" height="1.1" fill="#dbe6ff"/><rect x="6" y="7.5" width="3" height="1.1" fill="#dbe6ff"/><rect x="6" y="9.5" width="3" height="1.1" fill="#dbe6ff"/><rect x="6" y="11.5" width="3" height="1.1" fill="#dbe6ff"/><rect x="6" y="13.5" width="3" height="1.1" fill="#dbe6ff"/><rect x="11.3" y="9.5" width="2.7" height="1.1" fill="#dbe6ff"/><rect x="11.3" y="11.5" width="2.7" height="1.1" fill="#dbe6ff"/><rect x="11.3" y="13.5" width="2.7" height="1.1" fill="#dbe6ff"/><path d="M0 15.600h15" stroke="#1f63c4" stroke-width=".8"/></svg><svg style="left:43px;top:186px" width="17" height="16" viewBox="0 0 17 16"><defs><linearGradient id="fg" x1="0" y1="1" x2="1" y2="0"><stop offset="0" stop-color="#ffff00"/><stop offset=".45" stop-color="#ffe400"/><stop offset="1" stop-color="#ff8a00"/></linearGradient></defs><path d="M.8 1.800h6.200l1 1.500h7.500v11.200H.8z" fill="url(#fg)" stroke="#959595" stroke-width=".9"/><path d="M1.300 2.400h5.400" stroke="#ffd24a" stroke-width="1"/></svg><svg style="left:44px;top:202px" width="16" height="16" viewBox="0 0 16 16"><defs><linearGradient id="bm" x1="0" y1="0" x2="0" y2="1"><stop offset="0" stop-color="#ffb050"/><stop offset="1" stop-color="#c8480a"/></linearGradient></defs><path d="M0 1.500h12.500" stroke="#9a9a9a" stroke-width=".8"/><rect x="0.500" y="1.500" width="2.300" height="11.500" fill="#9a9a9a"/><path d="M1.200 3.500h1M1.200 6h1M1.200 8.500h1M1.200 11h1" stroke="#fff" stroke-width="1.100"/><circle cx="1.300" cy=".900" r=".9" fill="none" stroke="#8a4af0" stroke-width=".7"/><path d="M8.500 2L4 8.600h9z" fill="#8a5cf0"/><path d="M8.500 2L4 8.600M8.500 2L13 8.600" stroke="#7a2424" stroke-width=".8"/><path d="M11.400 3.200L13 .500l1 3.500.8 4.500h-2z" fill="#8a5cf0"/><rect x="3" y="8.300" width="11.500" height="3.200" fill="url(#bm)"/><path d="M3 12.400h11.500" stroke="#4a3030" stroke-width=".9"/><rect x="5" y="14" width="10.600" height="2" fill="#2a86ff"/><path d="M7 14v2M9.500 14v2M12 14v2M14 14v2" stroke="#d6e8ff" stroke-width=".7"/></svg><svg style="left:43px;top:218px" width="16" height="16" viewBox="0 0 16 16"><path d="M1.5 8.5L8 2l6.5 6.5" stroke="#c86a1e" stroke-width="1.6" fill="none"/><rect x="3" y="1.5" width="2" height="4" fill="#f0a030"/><path d="M3 8.2L8 3.4l5 4.8V15H3z" fill="#fff" stroke="#9a9a9a" stroke-width=".8"/><rect x="4.6" y="9" width="2.6" height="6" fill="#ffb020" stroke="#c07818" stroke-width=".6"/><rect x="9" y="8.6" width="3" height="3.2" fill="#4a90ff"/><path d="M1 15.3h14" stroke="#707070"/></svg><svg style="left:44px;top:234px" width="16" height="16" viewBox="0 0 16 16"><rect x="4" y="0" width="9" height="8" fill="#ffe94a" stroke="#e8c020" stroke-width=".6"/><path d="M5 2h7" stroke="#fff8b0" stroke-width="1.2"/><path d="M.8 8.4c2.4 5.6 8.6 7.2 13.2 3.6l.4-3.4-4.2 1.2c-2 .4-3.800 0-5.4-1.200z" fill="#f59a3a"/><path d="M4.600 9.6c2 1.400 4.800 1.400 6.800.2" stroke="#b8601a" stroke-width=".9" fill="none"/><path d="M15.200 7v7.500" stroke="#555" stroke-width="1.2"/></svg><svg style="left:44px;top:250px" width="16" height="16" viewBox="0 0 16 16"><ellipse cx="7.5" cy="3" rx="3.6" ry="1.8" fill="#e6eef2" stroke="#9ab0bc" stroke-width=".7"/><path d="M2.8 5.4h9.4" stroke="#5a7484" stroke-width="1.4"/><path d="M4 6.500h7l-.4 8.500H4.400z" fill="#7c94a2"/><path d="M5.500 7v8M7.500 7v8M9.500 7v8M4.200 9h6.600M4.200 11h6.600M4.200 13h6.600" stroke="#40586a" stroke-width=".7"/><path d="M3 15.500h9" stroke="#40586a" stroke-width="1.200"/></svg></body></html>
